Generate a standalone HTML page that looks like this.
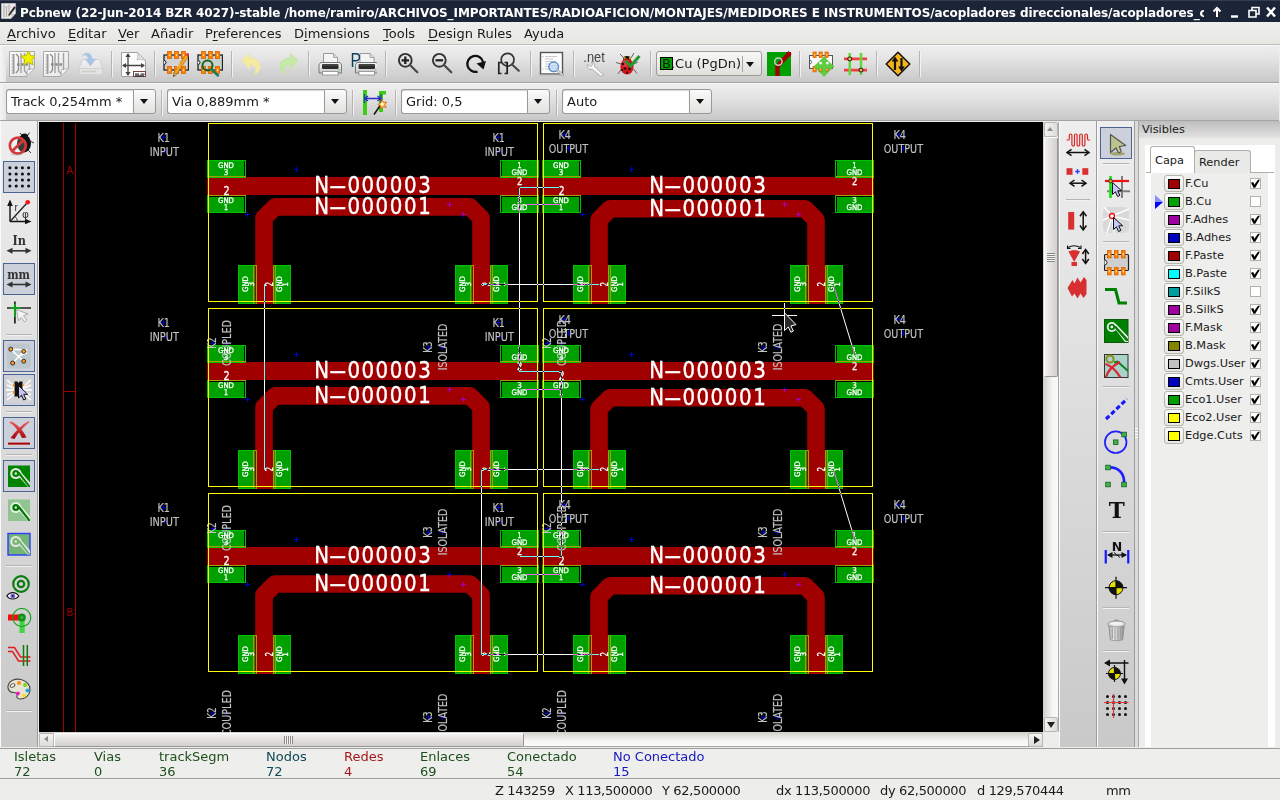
<!DOCTYPE html>
<html lang="es"><head><meta charset="utf-8"><title>Pcbnew</title>
<style>
html,body{margin:0;padding:0}
body{width:1280px;height:800px;overflow:hidden;position:relative;background:#ededeb;font-family:"DejaVu Sans","Liberation Sans",sans-serif;font-size:13px;color:#1a1a1a}
div,span,svg,i{position:absolute;box-sizing:border-box}
i{display:block}
svg text{font-family:"DejaVu Sans","Liberation Sans",sans-serif}
#title{left:0;top:0;width:1280px;height:22px;background:#1b2537;border-top:1px solid #343e52;color:#fff;font-weight:bold;font-size:12px;line-height:25px;white-space:nowrap;overflow:hidden}
#menu{left:0;top:22px;width:1280px;height:23px;background:linear-gradient(#efefed,#e6e6e3);border-bottom:1px solid #bdbdb9}
#menu span{top:1px;line-height:22px;font-size:13px;white-space:nowrap}
#menu u{text-decoration:underline;text-underline-offset:2px}
.tb{left:0;width:1279px;background:linear-gradient(#eeeeee,#e4e4e4 35%,#c8c8c8);border-top:1px solid #f8f8f8;border-bottom:1px solid #a4a4a4}
.tb .grip{left:0;top:0;width:6px;height:100%;background:linear-gradient(90deg,#f4f4f4,#e6e6e6)}
.sep{width:2px;border-left:1px solid #b4b4b4;border-right:1px solid #f2f2f2}
.hsep{height:2px;border-top:1px solid #b4b4b4;border-bottom:1px solid #f2f2f2}
.ic{width:26px;height:26px}
.ic svg{left:0;top:0}
.combo{height:25px;top:5px;font-size:13px}
.combo .f{left:0;top:0;height:25px;background:#fff;border:1px solid #9a9a94;border-right:none;border-radius:3px 0 0 3px;box-shadow:inset 0 1px 1px #d8d8d8;line-height:24px;padding-left:4px;white-space:nowrap;overflow:hidden}
.combo .b{top:0;width:23px;height:25px;background:linear-gradient(#fafafa,#e2e2e0);border:1px solid #9a9a94;border-radius:0 3px 3px 0}
.combo .b:after{content:"";position:absolute;left:6px;top:9px;border:4.500px solid transparent;border-top:5px solid #111;border-bottom:none}
.vtb{background:linear-gradient(#eeeeee,#c9c9c9);border-left:1px solid #fafafa;border-right:1px solid #9c9c9c}
.sel{background:#cbd0db;border:1px solid #4b6592}
#canvas{left:39px;top:122px;width:1004px;height:610px;background:#000}
.msg{font-size:13px;line-height:15px;white-space:nowrap}
.lay{left:1151px;width:116px;height:18px;font-size:11.33px}
.lay .sw{left:13px;top:1px;width:20px;height:17px;background:linear-gradient(#fbfbfa,#e6e6e3);border:1px solid #b5b5ae;border-radius:3px}
.lay .sw i{left:3px;top:3px;width:12px;height:10px;border:1px solid #000}
.lay .nm{left:34px;top:0;line-height:18px;white-space:nowrap}
.lay .cb{left:99px;top:4px;width:11px;height:11px;background:#fff;border:1px solid #b2b2aa}
.lay .cb svg{left:-1.500px;top:-1px}
</style></head>
<body>
<div id="title"><svg style="left:1px;top:2px" width="16" height="16" viewBox="0 0 16 16"><path d="M0.500 0.500H14.500V10.500L10 15.500H0.500z" fill="#ececec" stroke="#d8d8d8" stroke-width=".6"/><path d="M10 15.500l.6-4.400 3.900-.6z" fill="#c8c8c8"/><path d="M3 1.500v13M5.500 3v11M8 1.500v8" stroke="#b4b4b4" stroke-width="1.300" fill="none"/><path d="M2 4h9" stroke="#c8c8c8" stroke-width=".8"/><path d="M13.200 3.600l1.500 1L8.600 12.600l-1.300.4.200-1.400z" fill="#1c1c1c" stroke="#555" stroke-width=".5"/><path d="M7.300 13l.3-1.600 1.200.9z" fill="#e8d838"/><path d="M13.300 3.500l.9-1 1.400 1-.8 1.100z" fill="#e878c8"/></svg><span style="left:20px;top:0;width:1184px;overflow:hidden;letter-spacing:-0.12px">Pcbnew (22-Jun-2014 BZR 4027)-stable <b style="letter-spacing:-0.092px">/home/ramiro/ARCHIVOS_IMPORTANTES/RADIOAFICION/MONTAJES/MEDIDORES E INSTRUMENTOS/acopladores direccionales/acopladores_c</b></span><svg style="left:1208px;top:0" width="72" height="22" viewBox="0 0 72 22" fill="none" stroke="#fff" stroke-width="2"><path d="M9 16V7M5.5 10.5L9 7l3.5 3.500"/><path d="M23 15.500h7" stroke-width="2.400"/><path d="M41 9.500h7v6.500h-7zM44 9V6.500h7V13h-2.500" stroke-width="1.600"/><path d="M59 6.500l8 9M67 6.500l-8 9" stroke-width="2.400"/></svg></div>
<div id="menu">
<span style="left:7px"><u>A</u>rchivo</span>
<span style="left:68px"><u>E</u>ditar</span>
<span style="left:118px"><u>V</u>er</span>
<span style="left:151px">Añadir</span>
<span style="left:205px">P<u>r</u>eferences</span>
<span style="left:294px">D<u>i</u>mensions</span>
<span style="left:383px"><u>T</u>ools</span>
<span style="left:428px"><u>D</u>esign Rules</span>
<span style="left:524px">Ayuda</span>
</div>
<div class="tb" id="tb1" style="top:45px;height:38px"><i class="grip"></i>
<div class="ic" style="left:9px;top:5px"><svg width="26" height="26" viewBox="0 0 26 26"><defs><linearGradient id="pg" x1="0" y1="0" x2="1" y2="1"><stop offset="0" stop-color="#fff"/><stop offset="1" stop-color="#e2e2e2"/></linearGradient></defs><path d="M0.500 0.500H25.500V17.500L17.500 25.500H0.500z" fill="url(#pg)" stroke="#a8a8a8"/><path d="M17.500 25.500L18.500 18.500L25.500 17.500z" fill="#f4f4f4" stroke="#b0b0b0" stroke-width=".8"/><path d="M4.500 3v20" stroke="#9a9a9a" stroke-width="2"/><path d="M7 3l2.500 2.500V19l-2.500 3" stroke="#8a8a8a" fill="none" stroke-width="1.200"/><path d="M12 2v20M15.500 2v18l3 3M20.500 2v17" stroke="#a2a2a2" fill="none" stroke-width="1.400"/><path d="M8 13.500h11" stroke="#8c8c8c" stroke-width="2.400" stroke-dasharray="2.600 1.600"/><path d="M2.500 3v20" stroke="#c4c4c4" stroke-dasharray="1 2.200"/><path d="M19.400 -0.400l2.200 5 5.400.5-4.100 3.600 1.200 5.300-4.700-2.800-4.700 2.800 1.200-5.300-4.100-3.600 5.400-.5z" fill="#f2f200" stroke="#b4b400" stroke-width=".9" stroke-linejoin="round"/></svg></div>
<div class="ic" style="left:43px;top:5px"><svg width="26" height="26" viewBox="0 0 26 26"><defs><linearGradient id="pg" x1="0" y1="0" x2="1" y2="1"><stop offset="0" stop-color="#fff"/><stop offset="1" stop-color="#e2e2e2"/></linearGradient></defs><path d="M0.500 0.500H25.500V17.500L17.500 25.500H0.500z" fill="url(#pg)" stroke="#a8a8a8"/><path d="M17.500 25.500L18.500 18.500L25.500 17.500z" fill="#f4f4f4" stroke="#b0b0b0" stroke-width=".8"/><path d="M4.500 3v20" stroke="#9a9a9a" stroke-width="2"/><path d="M7 3l2.500 2.500V19l-2.500 3" stroke="#8a8a8a" fill="none" stroke-width="1.200"/><path d="M12 2v20M15.500 2v18l3 3M20.500 2v17" stroke="#a2a2a2" fill="none" stroke-width="1.400"/><path d="M8 13.500h11" stroke="#8c8c8c" stroke-width="2.400" stroke-dasharray="2.600 1.600"/><path d="M2.500 3v20" stroke="#c4c4c4" stroke-dasharray="1 2.200"/></svg></div>
<div class="ic" style="left:78px;top:5px"><svg width="26" height="26" viewBox="0 0 26 26"><defs><linearGradient id="sv" x1="0" y1="0" x2="0" y2="1"><stop offset="0" stop-color="#f2f2f2"/><stop offset="1" stop-color="#dcdcdc"/></linearGradient></defs><path d="M4.500 8.500h17l3.500 9v6.500h-24v-6.500z" fill="url(#sv)" stroke="#d0d0d0"/><rect x="1.500" y="17.500" width="23" height="6" fill="#e4e4e4" stroke="#d2d2d2"/><path d="M4 20.500h14" stroke="#cdcdcd" stroke-width="1.600"/><path d="M4 5.500c2-5 9-5 10.500 2.500h3.500l-5.500 7-5.500-7h3.200c-.7-4.500-4-4.800-6.200-2.500z" fill="#a9c3e2" stroke="#b9cde6" stroke-width=".6"/></svg></div>
<div class="ic" style="left:121px;top:5px"><svg width="26" height="26" viewBox="0 0 26 26"><path d="M0.500 1.500H16.500L24.500 9.500V25.500H0.500z" fill="#fdfdfd" stroke="#a0a0a0"/><path d="M16.500 1.500c1 3 0 6-.5 7.500 2-.8 5-.8 8.500.5z" fill="#e0e0e0" stroke="#b0b0b0" stroke-width=".7"/><path d="M7 3v21M2 14.500h21" stroke="#444" stroke-width="1.300"/><path d="M7 2l-2.600 4h5.200zM7 25l-2.600-4h5.200zM1 14.500l4-2.600v5.200zM24 14.500l-4-2.600v5.200z" fill="#444"/><rect x="12.500" y="20.500" width="12" height="5" fill="#fff" stroke="#6a3030" stroke-width=".9"/><path d="M14 23.200h4M19.500 23.200h4M14 25h9" stroke="#333" stroke-width="1.300"/></svg></div>
<div class="ic" style="left:163px;top:5px"><svg width="26" height="26" viewBox="0 0 26 26"><rect x="1" y="4" width="24.500" height="15" fill="#d2d2d2" stroke="#222" stroke-width="1.300"/><path d="M1 9.500a2 2 0 0 1 0 4" fill="#eee" stroke="#222" stroke-width="1"/><rect x="4.5" y="0.5" width="4" height="7" fill="#ff8200" stroke="#d86400" stroke-width=".8"/><rect x="5.9" y="3.3" width="1.300" height="1.600" fill="#ffe8c8"/><rect x="4.5" y="15.5" width="4" height="7" fill="#ff8200" stroke="#d86400" stroke-width=".8"/><rect x="5.9" y="18.3" width="1.300" height="1.600" fill="#ffe8c8"/><rect x="11.5" y="0.5" width="4" height="7" fill="#ff8200" stroke="#d86400" stroke-width=".8"/><rect x="12.9" y="3.3" width="1.300" height="1.600" fill="#ffe8c8"/><rect x="11.5" y="15.5" width="4" height="7" fill="#ff8200" stroke="#d86400" stroke-width=".8"/><rect x="12.9" y="18.3" width="1.300" height="1.600" fill="#ffe8c8"/><rect x="18.5" y="0.5" width="4" height="7" fill="#ff8200" stroke="#d86400" stroke-width=".8"/><rect x="19.9" y="3.3" width="1.300" height="1.600" fill="#ffe8c8"/><rect x="18.5" y="15.5" width="4" height="7" fill="#ff8200" stroke="#d86400" stroke-width=".8"/><rect x="19.9" y="18.3" width="1.300" height="1.600" fill="#ffe8c8"/><path d="M22.600 3.800l2.600 1.700L13.500 23.300l-3 2.300.4-4z" fill="#f5a623" stroke="#b26a00" stroke-width=".7"/><path d="M16.500 12.500L14 16.500" stroke="#ffd98a" stroke-width="1"/><path d="M22.600 3.800l1-1.300a1.600 1.600 0 0 1 2.600 1.700l-1 1.300z" fill="#e8384f"/><path d="M10.500 25.600l.4-4 2.600 1.700z" fill="#e8c9a0" stroke="#6a4a20" stroke-width=".5"/><path d="M10.500 25.600l.2-1.600 1.100.7z" fill="#222"/></svg></div>
<div class="ic" style="left:197px;top:5px"><svg width="26" height="26" viewBox="0 0 26 26"><rect x="1" y="4" width="24.500" height="15" fill="#c8d2cc" stroke="#222" stroke-width="1.300"/><path d="M1 9.500a2 2 0 0 1 0 4" fill="#eee" stroke="#222" stroke-width="1"/><rect x="4.5" y="0.5" width="4" height="7" fill="#ff8200" stroke="#d86400" stroke-width=".8"/><rect x="5.9" y="3.3" width="1.300" height="1.600" fill="#ffe8c8"/><rect x="4.5" y="15.5" width="4" height="7" fill="#ff8200" stroke="#d86400" stroke-width=".8"/><rect x="5.9" y="18.3" width="1.300" height="1.600" fill="#ffe8c8"/><rect x="11.5" y="0.5" width="4" height="7" fill="#ff8200" stroke="#d86400" stroke-width=".8"/><rect x="12.9" y="3.3" width="1.300" height="1.600" fill="#ffe8c8"/><rect x="11.5" y="15.5" width="4" height="7" fill="#ff8200" stroke="#d86400" stroke-width=".8"/><rect x="12.9" y="18.3" width="1.300" height="1.600" fill="#ffe8c8"/><rect x="18.5" y="0.5" width="4" height="7" fill="#ff8200" stroke="#d86400" stroke-width=".8"/><rect x="19.9" y="3.3" width="1.300" height="1.600" fill="#ffe8c8"/><rect x="18.5" y="15.5" width="4" height="7" fill="#ff8200" stroke="#d86400" stroke-width=".8"/><rect x="19.9" y="18.3" width="1.300" height="1.600" fill="#ffe8c8"/><circle cx="10.500" cy="14.500" r="5" fill="none" stroke="#20601f" stroke-width="2"/><path d="M14.500 18.500l6.500 6" stroke="#148060" stroke-width="2.400" stroke-linecap="round"/></svg></div>
<div class="ic" style="left:239px;top:5px"><svg width="26" height="26" viewBox="0 0 26 26"><path d="M3 9.500L10.500 3v4c7 0 10 4 10.500 8 .3 3-1.500 6-4 7.500-.8.400-1.500-.2-1-1 1.500-2.500 1.800-8-5.500-8v4.500z" fill="#f7eba0" stroke="#f1e69c" stroke-width="1"/></svg></div>
<div class="ic" style="left:275px;top:5px"><svg width="26" height="26" viewBox="0 0 26 26"><path d="M23 9.500L15.500 3v4c-7 0-10 4-10.500 8-.3 3 1.500 6 4 7.500.8.400 1.500-.2 1-1-1.500-2.500-1.800-8 5.500-8v4.500z" fill="#c4eaa6" stroke="#c0e6a4" stroke-width="1"/></svg></div>
<div class="ic" style="left:317px;top:5px"><svg width="26" height="26" viewBox="0 0 26 26"><defs><linearGradient id="pr" x1="0" y1="0" x2="0" y2="1"><stop offset="0" stop-color="#fafafa"/><stop offset="1" stop-color="#c6c6c6"/></linearGradient></defs><path d="M6.500 12V2.500h10l4 4V12z" fill="#f4f4f4" stroke="#9a9a9a"/><path d="M16.500 2.500v4h4" fill="#ddd" stroke="#9a9a9a" stroke-width=".8"/><path d="M3.500 11.500h19.500l1.500 2.500v8h-22.500v-8z" fill="url(#pr)" stroke="#7a7a7a"/><rect x="5" y="13" width="16.500" height="5" rx="1" fill="#2c2c2c"/><path d="M5.500 14h15.500" stroke="#666" stroke-width=".8"/><rect x="5.500" y="20.500" width="15.500" height="3.500" fill="#fff" stroke="#8a8a8a" stroke-width=".8"/><circle cx="22.300" cy="18.800" r=".8" fill="#5fd24a"/></svg></div>
<div class="ic" style="left:351px;top:5px"><svg width="26" height="26" viewBox="0 0 26 26"><g transform="translate(2.500 0)"><defs><linearGradient id="pr" x1="0" y1="0" x2="0" y2="1"><stop offset="0" stop-color="#fafafa"/><stop offset="1" stop-color="#c6c6c6"/></linearGradient></defs><path d="M6.500 12V2.500h10l4 4V12z" fill="#f4f4f4" stroke="#9a9a9a"/><path d="M16.500 2.500v4h4" fill="#ddd" stroke="#9a9a9a" stroke-width=".8"/><path d="M3.500 11.500h19.500l1.500 2.500v8h-22.500v-8z" fill="url(#pr)" stroke="#7a7a7a"/><rect x="5" y="13" width="16.500" height="5" rx="1" fill="#2c2c2c"/><path d="M5.500 14h15.500" stroke="#666" stroke-width=".8"/><rect x="5.500" y="20.500" width="15.500" height="3.500" fill="#fff" stroke="#8a8a8a" stroke-width=".8"/><circle cx="22.300" cy="18.800" r=".8" fill="#5fd24a"/></g><text x="-0.500" y="15.500" font-size="20" fill="#0b3f5c" style="font-family:Liberation Sans,sans-serif" textLength="10.500" lengthAdjust="spacingAndGlyphs">P</text></svg></div>
<div class="ic" style="left:395px;top:5px"><svg width="26" height="26" viewBox="0 0 26 26"><circle cx="10.300" cy="9.300" r="6.400" fill="none" stroke="#333" stroke-width="1.900"/><path d="M15 14l7.300 7.300" stroke="#4a4a4a" stroke-width="2.300" stroke-linecap="round"/><path d="M6.500 9.300h7.600M10.300 5.500v7.600" stroke="#222" stroke-width="2.300"/></svg></div>
<div class="ic" style="left:429px;top:5px"><svg width="26" height="26" viewBox="0 0 26 26"><circle cx="10.300" cy="9.300" r="6.400" fill="none" stroke="#333" stroke-width="1.900"/><path d="M15 14l7.300 7.300" stroke="#4a4a4a" stroke-width="2.300" stroke-linecap="round"/><path d="M6.500 9.300h7.600" stroke="#222" stroke-width="2.300"/></svg></div>
<div class="ic" style="left:463px;top:5px"><svg width="26" height="26" viewBox="0 0 26 26"><path d="M14.500 20.600a8 8 0 1 1 5.600-9.600" fill="none" stroke="#111" stroke-width="2.300"/><path d="M13.500 12.500l9.500-2.500-2.500 8.500z" fill="#111"/></svg></div>
<div class="ic" style="left:497px;top:5px"><svg width="26" height="26" viewBox="0 0 26 26"><circle cx="10.600" cy="8.700" r="6.400" fill="none" stroke="#333" stroke-width="1.700"/><path d="M15 13.500l6.800 6.300" stroke="#4a4a4a" stroke-width="2.200" stroke-linecap="round"/><path d="M4.500 11.500H1.800v11h2.700M7.500 11.500h2.700v11H7.500" fill="none" stroke="#222" stroke-width="1.700"/><path d="M10.300 12v10" stroke="#222" stroke-width="1"/></svg></div>
<div class="ic" style="left:539px;top:5px"><svg width="26" height="26" viewBox="0 0 26 26"><rect x="1.500" y="1.500" width="22" height="21.500" fill="#fcfcfc" stroke="#555" stroke-width="1.400"/><path d="M0 24h24" stroke="#bbb" stroke-width="1"/><path d="M6 5.500h12M6 8h8M6 10.500h11M6 13h5M6 15.500h4M6 18h4" stroke="#c4c4c4" stroke-width=".9"/><path d="M3.500 5.500h1M3.500 18h1" stroke="#aaa"/><circle cx="14.700" cy="15.800" r="4.800" fill="#d7e6f7" stroke="#5b8fd0" stroke-width="1.500"/><path d="M11.500 14.500h6.500M11.500 17h6.500" stroke="#a9c6ea" stroke-width=".9"/><path d="M18.500 19.500l5 4.500" stroke="#9a9a9a" stroke-width="2.600" stroke-linecap="round"/><path d="M18.500 19.500l5 4.500" stroke="#dcdcdc" stroke-width="1.200" stroke-linecap="round"/></svg></div>
<div class="ic" style="left:581px;top:5px"><svg width="26" height="26" viewBox="0 0 26 26"><text x="2.300" y="11.200" font-size="14" fill="#444" style="font-family:Liberation Sans,sans-serif" textLength="21.500" lengthAdjust="spacingAndGlyphs">.net</text><path d="M6.500 13.500a3.600 3.600 0 0 0 4.600 4.800L20 25.500l2.600-1.600-9-8.300a3.600 3.600 0 0 0-3.400-4.700l1.700 2.600-2.200 2.200z" fill="#f6f6f6" stroke="#a8a8a8" stroke-width=".9"/></svg></div>
<div class="ic" style="left:615px;top:5px"><svg width="26" height="26" viewBox="0 0 26 26"><path d="M5 3l4 4M19 2l-3 5M1 11.500l5 1.500M3 23l3.500-5M23 11l-4 2M22 22.500l-3.500-4.500" stroke="#555" stroke-width=".9" fill="none"/><ellipse cx="12" cy="7.500" rx="4" ry="2.600" fill="#111"/><path d="M8.500 7h2M14 7h2" stroke="#f2d000" stroke-width="1.600"/><ellipse cx="12" cy="15.500" rx="6.600" ry="8" fill="#d81418"/><ellipse cx="10" cy="12.500" rx="3" ry="3.500" fill="#f0505a" opacity=".6"/><circle cx="8" cy="13" r="1.200" fill="#111"/><circle cx="10" cy="17.500" r="1.300" fill="#111"/><circle cx="14.500" cy="18" r="1.300" fill="#111"/><circle cx="12" cy="21.500" r="1.100" fill="#111"/><circle cx="16" cy="13.500" r="1.100" fill="#111"/><circle cx="7" cy="19" r="1" fill="#111"/><path d="M10.500 9.500l5 5.500 9-10" fill="none" stroke="#1f9a2c" stroke-width="3"/></svg></div>
<div class="ic" style="left:766px;top:5px"><svg width="26" height="26" viewBox="0 0 26 26"><rect x="1" y="1" width="24" height="24" fill="#00a000"/><path d="M11.500 25V15.500L24 1.500" fill="none" stroke="#a00000" stroke-width="4.400"/><path d="M20 1h5v5z" fill="#a00000"/><circle cx="12.400" cy="10.600" r="3.700" fill="none" stroke="#c8c8c8" stroke-width="1.500"/></svg></div>
<div class="ic" style="left:808px;top:5px"><svg width="26" height="26" viewBox="0 0 26 26"><rect x="1.500" y="4.500" width="23" height="13" fill="#fafafa" stroke="#555" stroke-width="1"/><path d="M1.500 9a2 2 0 0 1 0 4" fill="none" stroke="#555" stroke-width=".8"/><rect x="5.0" y="1.0" width="3.200" height="5.400" fill="#ff8200" stroke="#d86400" stroke-width=".7"/><rect x="6.1" y="3.0" width="1" height="1.400" fill="#ffe8c8"/><rect x="5.0" y="15.5" width="3.200" height="5.400" fill="#ff8200" stroke="#d86400" stroke-width=".7"/><rect x="6.1" y="17.5" width="1" height="1.400" fill="#ffe8c8"/><rect x="11.0" y="1.0" width="3.200" height="5.400" fill="#ff8200" stroke="#d86400" stroke-width=".7"/><rect x="12.1" y="3.0" width="1" height="1.400" fill="#ffe8c8"/><rect x="11.0" y="15.5" width="3.200" height="5.400" fill="#ff8200" stroke="#d86400" stroke-width=".7"/><rect x="12.1" y="17.5" width="1" height="1.400" fill="#ffe8c8"/><rect x="17.0" y="1.0" width="3.200" height="5.400" fill="#ff8200" stroke="#d86400" stroke-width=".7"/><rect x="18.1" y="3.0" width="1" height="1.400" fill="#ffe8c8"/><rect x="17.0" y="15.5" width="3.200" height="5.400" fill="#ff8200" stroke="#d86400" stroke-width=".7"/><rect x="18.1" y="17.5" width="1" height="1.400" fill="#ffe8c8"/><path d="M16 7l4.500 5h-2.700v3.200h3.200v-2.700l5 4.500-5 4.500v-2.700h-3.200v3.200h2.700l-4.500 5-4.500-5h2.700v-3.200h-3.200v2.700l-5-4.500 5-4.500v2.700h3.200v-3.200h-2.700z" fill="#5fce3e" stroke="#4cb830" stroke-width=".6" transform="translate(0 -1.500)"/></svg></div>
<div class="ic" style="left:842px;top:5px"><svg width="26" height="26" viewBox="0 0 26 26"><path d="M2 7.900h23M2 19.100h23" stroke="#f04040" stroke-width="2.600"/><path d="M7.750 2v22M19 2v22" stroke="#60d840" stroke-width="2.600"/><circle cx="7.750" cy="7.900" r="2" fill="#f7b267" stroke="#111" stroke-width="1"/><circle cx="19" cy="19.100" r="2" fill="#f7b267" stroke="#111" stroke-width="1"/></svg></div>
<div class="ic" style="left:885px;top:5px"><svg width="26" height="26" viewBox="0 0 26 26"><path d="M13 1.200L24.800 13 13 24.800 1.200 13z" fill="#f5b41c" stroke="#111" stroke-width="1.500" stroke-linejoin="round"/><path d="M10 19V9M16.500 7v10" stroke="#111" stroke-width="2.200"/><path d="M10 5.500l-3.400 5h6.800zM16.500 20.500l-3.400-5h6.800z" fill="#111"/></svg></div>
<i class="sep" style="left:111px;top:5px;height:26px"></i>
<i class="sep" style="left:154px;top:5px;height:26px"></i>
<i class="sep" style="left:231px;top:5px;height:26px"></i>
<i class="sep" style="left:308px;top:5px;height:26px"></i>
<i class="sep" style="left:385px;top:5px;height:26px"></i>
<i class="sep" style="left:530px;top:5px;height:26px"></i>
<i class="sep" style="left:573px;top:5px;height:26px"></i>
<i class="sep" style="left:650px;top:5px;height:26px"></i>
<i class="sep" style="left:799px;top:5px;height:26px"></i>
<i class="sep" style="left:876px;top:5px;height:26px"></i>
<i class="sep" style="left:919px;top:5px;height:26px"></i>
<div style="left:656px;top:5px;width:106px;height:25px;border:1px solid #9c9c96;border-radius:3px;background:linear-gradient(#f8f8f7,#dfdfdc);font-size:13px;line-height:23px"><i style="left:3px;top:5px;width:13px;height:13px;background:#00a000;border:1px solid #000"></i><span style="left:5px;top:0">B.Cu (PgDn)</span><i style="left:85px;top:4px;width:1px;height:16px;background:#a8a8a2"></i><i style="left:89px;top:10px;border:4.500px solid transparent;border-top:5px solid #111;border-bottom:none"></i></div>
</div>
<div class="tb" id="tb2" style="top:83px;height:38px"><i class="grip"></i>
<div class="combo" style="left:6px;width:150px"><span class="f" style="width:127px">Track 0,254mm *</span><span class="b" style="left:127px"></span></div>
<i class="sep" style="left:161px;top:6px;height:26px"></i>
<div class="combo" style="left:167px;width:180px"><span class="f" style="width:157px">Via 0,889mm *</span><span class="b" style="left:157px"></span></div>
<i class="sep" style="left:352px;top:6px;height:26px"></i>
<div class="ic" style="left:361px;top:6px"><svg width="26" height="26" viewBox="0 0 26 26"><rect x="2" y="0" width="4" height="25" fill="#3ccc14"/><path d="M18 1h7v3.500h-3V22h-4z" fill="#3ccc14"/><path d="M3.500 4v9M20 4v9" stroke="#1a4a9a" stroke-width="1.400"/><path d="M4 8.500h15.500" stroke="#2828c8" stroke-width="1.500"/><path d="M7 6L4 8.500 7 11M16.500 6l3 2.500-3 2.500" fill="none" stroke="#2828c8" stroke-width="1.300"/><path d="M13 24.500l6.500-9.500" stroke="#111" stroke-width="1.500"/><path d="M21 9.500l1.400 2.900 3.200-.3-2 2.500 1.600 2.800-3.100-.8-2.200 2.400-.2-3.200-2.900-1.300 3-1.200z" fill="#ffd83a" stroke="#e85a20" stroke-width=".9"/><circle cx="21" cy="14" r="1.600" fill="#fffbe0"/></svg></div>
<i class="sep" style="left:395px;top:6px;height:26px"></i>
<div class="combo" style="left:401px;width:149px"><span class="f" style="width:126px">Grid: 0,5</span><span class="b" style="left:126px"></span></div>
<i class="sep" style="left:556px;top:6px;height:26px"></i>
<div class="combo" style="left:562px;width:150px"><span class="f" style="width:127px">Auto</span><span class="b" style="left:127px"></span></div>
</div>
<div class="vtb" style="left:0;top:121px;width:38px;height:626px">
<div class="ic" style="left:5px;top:9px"><svg width="30" height="26" viewBox="0 0 30 26"><path d="M14 3l3 3.500M23.500 2.500l-2.500 4M24 11l4 2M22 20l3 3" stroke="#222" stroke-width=".9" fill="none"/><ellipse cx="18" cy="13.500" rx="7" ry="9" fill="#111"/><ellipse cx="18.500" cy="6" rx="3.500" ry="2.500" fill="#111"/><circle cx="11.800" cy="15.600" r="8" fill="#fff" fill-opacity=".18" stroke="#d23a3a" stroke-width="2.700"/><path d="M6.300 21l11-10.800" stroke="#d23a3a" stroke-width="2.700"/><path d="M4.500 23.800c4 1.800 9 1.500 12.500-.3" stroke="#999" stroke-width="1" fill="none" opacity=".6"/></svg></div>
<i class="sel" style="left:2px;top:40px;width:32px;height:32px"></i>
<div class="ic" style="left:5px;top:42px"><svg width="26" height="28" viewBox="0 0 26 28"><circle cx="3.9" cy="4.8" r="1.550" fill="#111"/><circle cx="3.9" cy="11.0" r="1.550" fill="#111"/><circle cx="3.9" cy="17.0" r="1.550" fill="#111"/><circle cx="3.9" cy="23.0" r="1.550" fill="#111"/><circle cx="10.2" cy="4.8" r="1.550" fill="#111"/><circle cx="10.2" cy="11.0" r="1.550" fill="#111"/><circle cx="10.2" cy="17.0" r="1.550" fill="#111"/><circle cx="10.2" cy="23.0" r="1.550" fill="#111"/><circle cx="16.4" cy="4.8" r="1.550" fill="#111"/><circle cx="16.4" cy="11.0" r="1.550" fill="#111"/><circle cx="16.4" cy="17.0" r="1.550" fill="#111"/><circle cx="16.4" cy="23.0" r="1.550" fill="#111"/><circle cx="22.6" cy="4.8" r="1.550" fill="#111"/><circle cx="22.6" cy="11.0" r="1.550" fill="#111"/><circle cx="22.6" cy="17.0" r="1.550" fill="#111"/><circle cx="22.6" cy="23.0" r="1.550" fill="#111"/></svg></div>
<div class="ic" style="left:5px;top:76.5px"><svg width="27" height="27" viewBox="0 0 27 27"><path d="M4 23.500V5M4 23.500H22" stroke="#111" stroke-width="1.400"/><path d="M4 1.500l-2.800 6.500h5.600zM25.500 23.500l-6.500-2.800v5.600z" fill="#111"/><path d="M4 23.500L21 5" stroke="#222" stroke-width="1.300"/><circle cx="21.700" cy="4.200" r="2.300" fill="#ff1010"/><path d="M9 18.500a7 7 0 0 1 2.500 5" fill="none" stroke="#333" stroke-width=".9"/><text x="8.500" y="13" font-size="10" fill="#333" style="font-family:Liberation Sans,sans-serif">r</text><text x="16" y="19.500" font-size="10.500" fill="#333" style="font-family:DejaVu Sans,sans-serif">φ</text></svg></div>
<div class="ic" style="left:5px;top:111px"><svg width="26" height="26" viewBox="0 0 26 26"><text x="13.200" y="12.600" font-size="13" font-weight="bold" fill="#333" text-anchor="middle" style="font-family:DejaVu Serif,Liberation Serif,serif" textLength="13.500" lengthAdjust="spacingAndGlyphs">In</text><path d="M3 18.800h20" stroke="#333" stroke-width="1.600"/><path d="M0.500 18.800l6-3v6zM25.500 18.800l-6-3v6z" fill="#333"/></svg></div>
<i class="sel" style="left:2px;top:142px;width:32px;height:32px"></i>
<div class="ic" style="left:5px;top:145px"><svg width="26" height="26" viewBox="0 0 26 26"><text x="12.600" y="12.500" font-size="13.500" font-weight="bold" fill="#333" text-anchor="middle" style="font-family:DejaVu Serif,Liberation Serif,serif" textLength="22.800" lengthAdjust="spacingAndGlyphs">mm</text><path d="M3 18.500h20" stroke="#333" stroke-width="1.600"/><path d="M0.500 18.500l6-3v6zM25.500 18.500l-6-3v6z" fill="#333"/></svg></div>
<div class="ic" style="left:5px;top:179px"><svg width="26" height="26" viewBox="0 0 26 26"><path d="M1 8h24M8.900 1.500v22" stroke="#222" stroke-width="1.700"/><path d="M4.500 8H15M8.900 4v13" stroke="#10a020" stroke-width="1.900"/><path d="M10.500 9.500l11.500 4.500-4.500 1.700 3.300 4.300-2.300 1.800-3.300-4.400-2.700 3.600z" fill="#f4f4f4" stroke="#a8a8a8" stroke-width="1"/></svg></div>
<i class="sel" style="left:2px;top:219px;width:32px;height:32px"></i>
<div class="ic" style="left:5px;top:222px"><svg width="26" height="26" viewBox="0 0 26 26"><rect x="1" y="0.500" width="24" height="25" rx="4" fill="#bcc8ce"/><path d="M4.800 6.200L17.700 18.200M17.700 8.400L6.700 20M4.800 6.200l16 0.800M12 13l8.500-3" stroke="#fff" stroke-width="1.500" stroke-linecap="round"/><g fill="#ff9a1e" stroke="#222" stroke-width=".9"><circle cx="4.800" cy="6.200" r="2"/><circle cx="17.700" cy="8.400" r="2"/><circle cx="6.700" cy="20" r="2"/><circle cx="17.700" cy="18.200" r="2"/></g></svg></div>
<i class="sel" style="left:2px;top:253px;width:32px;height:32px"></i>
<div class="ic" style="left:5px;top:256px"><svg width="26" height="26" viewBox="0 0 26 26"><rect x="1" y="0.500" width="24" height="25" rx="4" fill="#d4d4d4"/><path d="M1 3l24 20M25 3L1 23M0 13h26M1 8l24 10M25 8L1 18" stroke="#fff" stroke-width="1.400"/><path d="M8.500 4.500h3l1 1.500 1-1.500h3v15h-8z" fill="#111"/><path d="M7.500 7v3M7.500 14v3M17.500 7v2" stroke="#ff9a1e" stroke-width="1.600"/><path d="M12.500 8.500v12.500l3-2.800 2.200 4.800 2.200-1-2.200-4.700h4z" fill="#c4c4f4" stroke="#111" stroke-width="1"/></svg></div>
<i class="sel" style="left:2px;top:296px;width:32px;height:32px"></i>
<div class="ic" style="left:5px;top:299px"><svg width="26" height="26" viewBox="0 0 26 26"><defs><linearGradient id="rx" x1="0" y1="0" x2="0" y2="1"><stop offset="0" stop-color="#f06060"/><stop offset="1" stop-color="#a00808"/></linearGradient></defs><path d="M3 2.500c5 2 10 9 13 15.500l4.500-.5c-3-7-9-13-15-16zM22.500 1c-7 4-13 10-18 17l4 1c4-7 9-12 15-17z" fill="url(#rx)"/><path d="M2 23.600h22" stroke="#b00000" stroke-width="2"/></svg></div>
<i class="sel" style="left:2px;top:339px;width:32px;height:32px"></i>
<div class="ic" style="left:5px;top:342px"><svg width="26" height="26" viewBox="0 0 26 26"><rect x="2" y="2.500" width="22" height="21.500" fill="#008400"/><path d="M10 10.500l4-2.500 10 11.500v4.500h-2z" fill="#e8e8e8"/><circle cx="9.800" cy="10.500" r="5.600" fill="#e8e8e8"/><path d="M11 9.500l2.500-.5 10.500 13.500v1.500h-1.500z" fill="#008400"/><circle cx="9.800" cy="10.500" r="3.500" fill="#008400"/><circle cx="9.800" cy="10.500" r="1.200" fill="#e8e8e8"/></svg></div>
<div class="ic" style="left:5px;top:376px"><svg width="26" height="26" viewBox="0 0 26 26"><rect x="2" y="2.500" width="22" height="21.500" fill="#90c490"/><path d="M10 10.500l4-2.500 10 11.500v4.500h-2z" fill="#e4efe4"/><circle cx="9.800" cy="10.500" r="5.600" fill="#e4efe4"/><path d="M11 9.500l2.500-.5 10.500 13.500v1.500h-1.500z" fill="#007800"/><circle cx="9.800" cy="10.500" r="3.500" fill="#007800"/><circle cx="9.800" cy="10.500" r="1.200" fill="#e4efe4"/></svg></div>
<div class="ic" style="left:5px;top:410px"><svg width="26" height="26" viewBox="0 0 26 26"><rect x="2" y="2.500" width="22" height="21.500" fill="#74b474" stroke="#2a3cff" stroke-width="1.400"/><path d="M10 10.500l4-2.500 10 11.500v4.500h-2z" fill="#e8e8e8"/><circle cx="9.800" cy="10.500" r="5.600" fill="#e8e8e8"/><path d="M11 9.500l2.500-.5 10.500 13.500v1.500h-1.500z" fill="#74b474"/><circle cx="9.800" cy="10.500" r="3.500" fill="#74b474"/><circle cx="9.800" cy="10.500" r="1.200" fill="#e8e8e8"/></svg></div>
<div class="ic" style="left:5px;top:453px"><svg width="26" height="28" viewBox="0 0 26 28"><circle cx="15" cy="10" r="7.800" fill="none" stroke="#0c7c10" stroke-width="2.200"/><circle cx="15" cy="10" r="3.200" fill="none" stroke="#0c7c10" stroke-width="2.200"/><path d="M0.800 22c3-4.500 9-4.500 12 0-3 4-9 4-12 0z" fill="#fff" stroke="#111" stroke-width="1.100"/><circle cx="6.800" cy="22" r="2.500" fill="#7a6ad8"/><circle cx="6.800" cy="22" r="1" fill="#223"/></svg></div>
<div class="ic" style="left:5px;top:487px"><svg width="26" height="27" viewBox="0 0 26 27"><rect x="2" y="6.500" width="12" height="6" fill="#f01010"/><rect x="13.500" y="12" width="5.200" height="13" fill="#44d444"/><circle cx="15.800" cy="9.500" r="9" fill="none" stroke="#10a018" stroke-width="1.100"/><circle cx="15.800" cy="9.500" r="4" fill="#14901c"/><circle cx="15.800" cy="9.500" r="1.300" fill="#44c444"/></svg></div>
<div class="ic" style="left:5px;top:522px"><svg width="26" height="26" viewBox="0 0 26 26"><path d="M2 4.500h6.500l6 9.500h10M2 8.500h4.500l6 9.500h12" fill="none" stroke="#e02020" stroke-width="1.500"/><path d="M17.500 2v21M21.300 2v21" stroke="#0c7c10" stroke-width="1.500"/></svg></div>
<div class="ic" style="left:5px;top:556px"><svg width="26" height="26" viewBox="0 0 26 26"><path d="M2 9c1-5 7-8 13-6.500 6 1.500 9.500 6 9 11-.5 5-5 8.500-10 8.500-3 0-3.500-2-3-3.500.5-2-1-3-3-3C4 15.500 1.500 13 2 9z" fill="#e8e4d2" stroke="#444" stroke-width="1.100"/><ellipse cx="6.500" cy="8.500" rx="2.500" ry="1.600" fill="#fff" stroke="#444" stroke-width=".9" transform="rotate(-25 6.500 8.500)"/><circle cx="13" cy="6" r="2" fill="#ff8a1a"/><circle cx="19" cy="8" r="2" fill="#7ad420"/><circle cx="21.500" cy="13.500" r="2" fill="#20a0f0"/><circle cx="18" cy="18.500" r="2" fill="#f4e020"/><circle cx="12" cy="16.500" r="2" fill="#f020c0"/></svg></div>
<i class="hsep" style="left:5px;top:213px;width:26px"></i>
<i class="hsep" style="left:5px;top:290px;width:26px"></i>
<i class="hsep" style="left:5px;top:333px;width:26px"></i>
<i class="hsep" style="left:5px;top:444px;width:26px"></i>
<i class="hsep" style="left:5px;top:589px;width:26px"></i>
</div>
<svg id="canvas" viewBox="39 122 1004 610" width="1004" height="610">
<g stroke="#a00000" stroke-width="1" fill="none" shape-rendering="crispEdges">
<path d="M63.5 123V732M75.5 123V732M63.5 391.5H75.5"/>
</g>
<text x="70.0" y="174.0" font-size="11.0" fill="#a00000" text-anchor="middle" textLength="7.0" lengthAdjust="spacingAndGlyphs">A</text>
<text x="70.0" y="616.0" font-size="11.0" fill="#a00000" text-anchor="middle" textLength="7.0" lengthAdjust="spacingAndGlyphs">B</text>
<g transform="translate(0,0)">
<g fill="#a00000" stroke="none" shape-rendering="crispEdges">
<rect x="207" y="177" width="332" height="18"/>
<rect x="254" y="265" width="20" height="39"/>
<rect x="471" y="265" width="20" height="39"/>
</g>
<path d="M264 300V217.9L275.0 206.9H470.0L481 217.9V300" fill="none" stroke="#a00000" stroke-width="17.6" stroke-linejoin="round"/>
<g fill="#00a000" stroke="none" shape-rendering="crispEdges">
<rect x="207" y="161" width="37" height="16"/>
<rect x="207" y="197" width="37" height="16"/>
<rect x="502" y="161" width="36" height="16"/>
<rect x="502" y="197" width="36" height="16"/>
<rect x="238" y="265" width="17" height="38"/>
<rect x="274" y="265" width="17" height="38"/>
<rect x="455" y="265" width="17" height="38"/>
<rect x="491" y="265" width="16" height="38"/>
</g>
<g fill="none" shape-rendering="crispEdges" stroke-width="1">
<g stroke="#00c200">
<rect x="207.5" y="160.5" width="38" height="17"/>
<rect x="207.5" y="195.5" width="38" height="17"/>
<rect x="500.5" y="160.5" width="38" height="17"/>
<rect x="500.5" y="195.5" width="38" height="17"/>
<rect x="238.5" y="265.5" width="18" height="38"/>
<rect x="273.5" y="265.5" width="17" height="38"/>
<rect x="455.5" y="265.5" width="18" height="38"/>
<rect x="490.5" y="265.5" width="17" height="38"/>
</g><g stroke="#a0a000">
<path d="M207.5 176.5H245.5M207.5 195.500H245.500M500.500 176.500H538.500M500.500 195.500H538.500"/>
<path d="M253.500 265.500V303.500M256.500 265.500V303.500M273.500 265.500V303.500M275.500 265.500V303.500M253.500 265.500H256.500M273.500 265.500H275.500"/>
<path d="M470.500 265.500V303.500M473.500 265.500V303.500M490.500 265.500V303.500M492.500 265.500V303.500M470.500 265.500H473.500M490.500 265.500H492.500"/>
</g></g>
</g>
<g transform="translate(335,0)">
<g fill="#a00000" stroke="none" shape-rendering="crispEdges">
<rect x="207" y="177" width="332" height="18"/>
<rect x="254" y="265" width="20" height="39"/>
<rect x="471" y="265" width="20" height="39"/>
</g>
<path d="M264 300V219.7L275.0 208.7H470.0L481 219.7V300" fill="none" stroke="#a00000" stroke-width="17.6" stroke-linejoin="round"/>
<g fill="#00a000" stroke="none" shape-rendering="crispEdges">
<rect x="207" y="161" width="37" height="16"/>
<rect x="207" y="197" width="37" height="16"/>
<rect x="502" y="161" width="36" height="16"/>
<rect x="502" y="197" width="36" height="16"/>
<rect x="238" y="265" width="17" height="38"/>
<rect x="274" y="265" width="17" height="38"/>
<rect x="455" y="265" width="17" height="38"/>
<rect x="491" y="265" width="16" height="38"/>
</g>
<g fill="none" shape-rendering="crispEdges" stroke-width="1">
<g stroke="#00c200">
<rect x="207.5" y="160.5" width="38" height="17"/>
<rect x="207.5" y="195.5" width="38" height="17"/>
<rect x="500.5" y="160.5" width="38" height="17"/>
<rect x="500.5" y="195.5" width="38" height="17"/>
<rect x="238.5" y="265.5" width="18" height="38"/>
<rect x="273.5" y="265.5" width="17" height="38"/>
<rect x="455.5" y="265.5" width="18" height="38"/>
<rect x="490.5" y="265.5" width="17" height="38"/>
</g><g stroke="#a0a000">
<path d="M207.5 176.5H245.5M207.5 195.500H245.500M500.500 176.500H538.500M500.500 195.500H538.500"/>
<path d="M253.500 265.500V303.500M256.500 265.500V303.500M273.500 265.500V303.500M275.500 265.500V303.500M253.500 265.500H256.500M273.500 265.500H275.500"/>
<path d="M470.500 265.500V303.500M473.500 265.500V303.500M490.500 265.500V303.500M492.500 265.500V303.500M470.500 265.500H473.500M490.500 265.500H492.500"/>
</g></g>
</g>
<g transform="translate(0,185)">
<g fill="#a00000" stroke="none" shape-rendering="crispEdges">
<rect x="207" y="177" width="332" height="18"/>
<rect x="254" y="265" width="20" height="39"/>
<rect x="471" y="265" width="20" height="39"/>
</g>
<path d="M264 300V221.9L275.0 210.9H470.0L481 221.9V300" fill="none" stroke="#a00000" stroke-width="17.6" stroke-linejoin="round"/>
<g fill="#00a000" stroke="none" shape-rendering="crispEdges">
<rect x="207" y="161" width="37" height="16"/>
<rect x="207" y="197" width="37" height="16"/>
<rect x="502" y="161" width="36" height="16"/>
<rect x="502" y="197" width="36" height="16"/>
<rect x="238" y="265" width="17" height="38"/>
<rect x="274" y="265" width="17" height="38"/>
<rect x="455" y="265" width="17" height="38"/>
<rect x="491" y="265" width="16" height="38"/>
</g>
<g fill="none" shape-rendering="crispEdges" stroke-width="1">
<g stroke="#00c200">
<rect x="207.5" y="160.5" width="38" height="17"/>
<rect x="207.5" y="195.5" width="38" height="17"/>
<rect x="500.5" y="160.5" width="38" height="17"/>
<rect x="500.5" y="195.5" width="38" height="17"/>
<rect x="238.5" y="265.5" width="18" height="38"/>
<rect x="273.5" y="265.5" width="17" height="38"/>
<rect x="455.5" y="265.5" width="18" height="38"/>
<rect x="490.5" y="265.5" width="17" height="38"/>
</g><g stroke="#a0a000">
<path d="M207.5 176.5H245.5M207.5 195.500H245.500M500.500 176.500H538.500M500.500 195.500H538.500"/>
<path d="M253.500 265.500V303.500M256.500 265.500V303.500M273.500 265.500V303.500M275.500 265.500V303.500M253.500 265.500H256.500M273.500 265.500H275.500"/>
<path d="M470.500 265.500V303.500M473.500 265.500V303.500M490.500 265.500V303.500M492.500 265.500V303.500M470.500 265.500H473.500M490.500 265.500H492.500"/>
</g></g>
</g>
<g transform="translate(335,185)">
<g fill="#a00000" stroke="none" shape-rendering="crispEdges">
<rect x="207" y="177" width="332" height="18"/>
<rect x="254" y="265" width="20" height="39"/>
<rect x="471" y="265" width="20" height="39"/>
</g>
<path d="M264 300V223.7L275.0 212.7H470.0L481 223.7V300" fill="none" stroke="#a00000" stroke-width="17.6" stroke-linejoin="round"/>
<g fill="#00a000" stroke="none" shape-rendering="crispEdges">
<rect x="207" y="161" width="37" height="16"/>
<rect x="207" y="197" width="37" height="16"/>
<rect x="502" y="161" width="36" height="16"/>
<rect x="502" y="197" width="36" height="16"/>
<rect x="238" y="265" width="17" height="38"/>
<rect x="274" y="265" width="17" height="38"/>
<rect x="455" y="265" width="17" height="38"/>
<rect x="491" y="265" width="16" height="38"/>
</g>
<g fill="none" shape-rendering="crispEdges" stroke-width="1">
<g stroke="#00c200">
<rect x="207.5" y="160.5" width="38" height="17"/>
<rect x="207.5" y="195.5" width="38" height="17"/>
<rect x="500.5" y="160.5" width="38" height="17"/>
<rect x="500.5" y="195.5" width="38" height="17"/>
<rect x="238.5" y="265.5" width="18" height="38"/>
<rect x="273.5" y="265.5" width="17" height="38"/>
<rect x="455.5" y="265.5" width="18" height="38"/>
<rect x="490.5" y="265.5" width="17" height="38"/>
</g><g stroke="#a0a000">
<path d="M207.5 176.5H245.5M207.5 195.500H245.500M500.500 176.500H538.500M500.500 195.500H538.500"/>
<path d="M253.500 265.500V303.500M256.500 265.500V303.500M273.500 265.500V303.500M275.500 265.500V303.500M253.500 265.500H256.500M273.500 265.500H275.500"/>
<path d="M470.500 265.500V303.500M473.500 265.500V303.500M490.500 265.500V303.500M492.500 265.500V303.500M470.500 265.500H473.500M490.500 265.500H492.500"/>
</g></g>
</g>
<g transform="translate(0,370)">
<g fill="#a00000" stroke="none" shape-rendering="crispEdges">
<rect x="207" y="177" width="332" height="18"/>
<rect x="254" y="265" width="20" height="39"/>
<rect x="471" y="265" width="20" height="39"/>
</g>
<path d="M264 300V225.0L275.0 214.0H470.0L481 225.0V300" fill="none" stroke="#a00000" stroke-width="17.6" stroke-linejoin="round"/>
<g fill="#00a000" stroke="none" shape-rendering="crispEdges">
<rect x="207" y="161" width="37" height="16"/>
<rect x="207" y="197" width="37" height="16"/>
<rect x="502" y="161" width="36" height="16"/>
<rect x="502" y="197" width="36" height="16"/>
<rect x="238" y="265" width="17" height="38"/>
<rect x="274" y="265" width="17" height="38"/>
<rect x="455" y="265" width="17" height="38"/>
<rect x="491" y="265" width="16" height="38"/>
</g>
<g fill="none" shape-rendering="crispEdges" stroke-width="1">
<g stroke="#00c200">
<rect x="207.5" y="160.5" width="38" height="17"/>
<rect x="207.5" y="195.5" width="38" height="17"/>
<rect x="500.5" y="160.5" width="38" height="17"/>
<rect x="500.5" y="195.5" width="38" height="17"/>
<rect x="238.5" y="265.5" width="18" height="38"/>
<rect x="273.5" y="265.5" width="17" height="38"/>
<rect x="455.5" y="265.5" width="18" height="38"/>
<rect x="490.5" y="265.5" width="17" height="38"/>
</g><g stroke="#a0a000">
<path d="M207.5 176.5H245.5M207.5 195.500H245.500M500.500 176.500H538.500M500.500 195.500H538.500"/>
<path d="M253.500 265.500V303.500M256.500 265.500V303.500M273.500 265.500V303.500M275.500 265.500V303.500M253.500 265.500H256.500M273.500 265.500H275.500"/>
<path d="M470.500 265.500V303.500M473.500 265.500V303.500M490.500 265.500V303.500M492.500 265.500V303.500M470.500 265.500H473.500M490.500 265.500H492.500"/>
</g></g>
</g>
<g transform="translate(335,370)">
<g fill="#a00000" stroke="none" shape-rendering="crispEdges">
<rect x="207" y="177" width="332" height="18"/>
<rect x="254" y="265" width="20" height="39"/>
<rect x="471" y="265" width="20" height="39"/>
</g>
<path d="M264 300V226.8L275.0 215.8H470.0L481 226.8V300" fill="none" stroke="#a00000" stroke-width="17.6" stroke-linejoin="round"/>
<g fill="#00a000" stroke="none" shape-rendering="crispEdges">
<rect x="207" y="161" width="37" height="16"/>
<rect x="207" y="197" width="37" height="16"/>
<rect x="502" y="161" width="36" height="16"/>
<rect x="502" y="197" width="36" height="16"/>
<rect x="238" y="265" width="17" height="38"/>
<rect x="274" y="265" width="17" height="38"/>
<rect x="455" y="265" width="17" height="38"/>
<rect x="491" y="265" width="16" height="38"/>
</g>
<g fill="none" shape-rendering="crispEdges" stroke-width="1">
<g stroke="#00c200">
<rect x="207.5" y="160.5" width="38" height="17"/>
<rect x="207.5" y="195.5" width="38" height="17"/>
<rect x="500.5" y="160.5" width="38" height="17"/>
<rect x="500.5" y="195.5" width="38" height="17"/>
<rect x="238.5" y="265.5" width="18" height="38"/>
<rect x="273.5" y="265.5" width="17" height="38"/>
<rect x="455.5" y="265.5" width="18" height="38"/>
<rect x="490.5" y="265.5" width="17" height="38"/>
</g><g stroke="#a0a000">
<path d="M207.5 176.5H245.5M207.5 195.500H245.500M500.500 176.500H538.500M500.500 195.500H538.500"/>
<path d="M253.500 265.500V303.500M256.500 265.500V303.500M273.500 265.500V303.500M275.500 265.500V303.500M253.500 265.500H256.500M273.500 265.500H275.500"/>
<path d="M470.500 265.500V303.500M473.500 265.500V303.500M490.500 265.500V303.500M492.500 265.500V303.500M470.500 265.500H473.500M490.500 265.500H492.500"/>
</g></g>
</g>
<g transform="translate(0,0)">
<g transform="translate(315.6 193.0) scale(0.85 1)"><text x="-1.5 14.8 37.6 54.1 70.6 87.3 103.9 120.8" y="0" font-size="23.3" fill="#fff" stroke="#fff" stroke-width="0.45">N<tspan textLength="22.5" lengthAdjust="spacingAndGlyphs">-</tspan>000003</text></g>
<g transform="translate(315.6 213.9) scale(0.85 1)"><text x="-1.5 14.8 37.6 54.1 70.6 87.3 103.9 120.8" y="0" font-size="23.3" fill="#fff" stroke="#fff" stroke-width="0.45">N<tspan textLength="22.5" lengthAdjust="spacingAndGlyphs">-</tspan>000001</text></g>
<text x="226.0" y="168.0" font-size="7.7" fill="#fff" text-anchor="middle" textLength="16.0" lengthAdjust="spacingAndGlyphs" stroke="#fff" stroke-width="0.3">GND</text>
<text x="226.0" y="175.0" font-size="7.9" fill="#fff" text-anchor="middle" textLength="4.6" lengthAdjust="spacingAndGlyphs" stroke="#fff" stroke-width="0.3">3</text>
<text x="226.5" y="195.0" font-size="12.0" fill="#fff" text-anchor="middle" textLength="6.2" lengthAdjust="spacingAndGlyphs" stroke="#fff" stroke-width="0.3">2</text>
<text x="226.0" y="203.0" font-size="7.7" fill="#fff" text-anchor="middle" textLength="16.0" lengthAdjust="spacingAndGlyphs" stroke="#fff" stroke-width="0.3">GND</text>
<text x="226.0" y="210.0" font-size="7.9" fill="#fff" text-anchor="middle" textLength="4.0" lengthAdjust="spacingAndGlyphs" stroke="#fff" stroke-width="0.3">1</text>
<text x="519.5" y="168.0" font-size="7.9" fill="#fff" text-anchor="middle" textLength="4.0" lengthAdjust="spacingAndGlyphs" stroke="#fff" stroke-width="0.3">1</text>
<text x="519.5" y="175.0" font-size="7.7" fill="#fff" text-anchor="middle" textLength="16.0" lengthAdjust="spacingAndGlyphs" stroke="#fff" stroke-width="0.3">GND</text>
<text x="519.7" y="184.5" font-size="9.6" fill="#fff" text-anchor="middle" textLength="5.4" lengthAdjust="spacingAndGlyphs" stroke="#fff" stroke-width="0.3">2</text>
<text x="519.5" y="203.0" font-size="7.9" fill="#fff" text-anchor="middle" textLength="4.6" lengthAdjust="spacingAndGlyphs" stroke="#fff" stroke-width="0.3">3</text>
<text x="519.5" y="210.0" font-size="7.7" fill="#fff" text-anchor="middle" textLength="16.0" lengthAdjust="spacingAndGlyphs" stroke="#fff" stroke-width="0.3">GND</text>
<text transform="translate(247.5 284.0) rotate(-90)" font-size="7.7" fill="#fff" text-anchor="middle" textLength="16.0" lengthAdjust="spacingAndGlyphs" stroke="#fff" stroke-width="0.3">GND</text>
<text transform="translate(254.0 284.3) rotate(-90)" font-size="7.9" fill="#fff" text-anchor="middle" textLength="4.6" lengthAdjust="spacingAndGlyphs" stroke="#fff" stroke-width="0.3">3</text>
<text transform="translate(272.5 284.3) rotate(-90)" font-size="9.6" fill="#fff" text-anchor="middle" textLength="4.6" lengthAdjust="spacingAndGlyphs" stroke="#fff" stroke-width="0.3">2</text>
<text transform="translate(282.0 284.0) rotate(-90)" font-size="7.7" fill="#fff" text-anchor="middle" textLength="16.0" lengthAdjust="spacingAndGlyphs" stroke="#fff" stroke-width="0.3">GND</text>
<text transform="translate(288.0 284.5) rotate(-90)" font-size="7.9" fill="#fff" text-anchor="middle" textLength="4.6" lengthAdjust="spacingAndGlyphs" stroke="#fff" stroke-width="0.3">1</text>
<text transform="translate(464.5 284.0) rotate(-90)" font-size="7.7" fill="#fff" text-anchor="middle" textLength="16.0" lengthAdjust="spacingAndGlyphs" stroke="#fff" stroke-width="0.3">GND</text>
<text transform="translate(471.0 284.3) rotate(-90)" font-size="7.9" fill="#fff" text-anchor="middle" textLength="4.6" lengthAdjust="spacingAndGlyphs" stroke="#fff" stroke-width="0.3">3</text>
<text transform="translate(489.5 284.3) rotate(-90)" font-size="9.6" fill="#fff" text-anchor="middle" textLength="4.6" lengthAdjust="spacingAndGlyphs" stroke="#fff" stroke-width="0.3">2</text>
<text transform="translate(499.0 284.0) rotate(-90)" font-size="7.7" fill="#fff" text-anchor="middle" textLength="16.0" lengthAdjust="spacingAndGlyphs" stroke="#fff" stroke-width="0.3">GND</text>
<text transform="translate(505.0 284.5) rotate(-90)" font-size="7.9" fill="#fff" text-anchor="middle" textLength="4.6" lengthAdjust="spacingAndGlyphs" stroke="#fff" stroke-width="0.3">1</text>
<text x="163.7" y="142.0" font-size="11.6" fill="#c2c2c2" text-anchor="middle" textLength="12.5" lengthAdjust="spacingAndGlyphs" stroke="#c2c2c2" stroke-width="0.15">K1</text>
<text x="164.3" y="156.0" font-size="11.6" fill="#c2c2c2" text-anchor="middle" textLength="29.3" lengthAdjust="spacingAndGlyphs" stroke="#c2c2c2" stroke-width="0.15">INPUT</text>
<text x="564.7" y="139.0" font-size="11.6" fill="#c2c2c2" text-anchor="middle" textLength="12.5" lengthAdjust="spacingAndGlyphs" stroke="#c2c2c2" stroke-width="0.15">K4</text>
<text x="568.4" y="153.0" font-size="11.6" fill="#c2c2c2" text-anchor="middle" textLength="39.3" lengthAdjust="spacingAndGlyphs" stroke="#c2c2c2" stroke-width="0.15">OUTPUT</text>
<text transform="translate(216.3 343.2) rotate(-90)" font-size="11.6" fill="#c2c2c2" text-anchor="middle" textLength="11.3" lengthAdjust="spacingAndGlyphs" stroke="#c2c2c2" stroke-width="0.15">K2</text>
<text transform="translate(230.5 343.1) rotate(-90)" font-size="11.6" fill="#c2c2c2" text-anchor="middle" textLength="46.0" lengthAdjust="spacingAndGlyphs" stroke="#c2c2c2" stroke-width="0.15">COUPLED</text>
<text transform="translate(432.3 347.2) rotate(-90)" font-size="11.6" fill="#c2c2c2" text-anchor="middle" textLength="11.3" lengthAdjust="spacingAndGlyphs" stroke="#c2c2c2" stroke-width="0.15">K3</text>
<text transform="translate(446.5 347.0) rotate(-90)" font-size="11.6" fill="#c2c2c2" text-anchor="middle" textLength="46.4" lengthAdjust="spacingAndGlyphs" stroke="#c2c2c2" stroke-width="0.15">ISOLATED</text>
<g shape-rendering="crispEdges" stroke-width="1" fill="none" style="mix-blend-mode:lighten">
<path d="M161.0 137.5h5M163.5 135.0v5" stroke="#0000c8"/>
<path d="M162.0 151.5h5M164.5 149.0v5" stroke="#0000c8"/>
<path d="M562.0 134.5h5M564.5 132.0v5" stroke="#0000c8"/>
<path d="M566.0 148.5h5M568.5 146.0v5" stroke="#0000c8"/>
<path d="M210.0 343.5h5M212.5 341.0v5" stroke="#0000c8"/>
<path d="M224.0 343.5h5M226.5 341.0v5" stroke="#0000c8"/>
<path d="M426.0 347.5h5M428.5 345.0v5" stroke="#0000c8"/>
<path d="M440.0 347.5h5M442.5 345.0v5" stroke="#0000c8"/>
<path d="M294.0 169.5h5M296.5 167.0v5" stroke="#0000c8"/>
<path d="M245.0 214.5h5M247.5 212.0v5" stroke="#0000c8"/>
<path d="M447.0 204.5h5M449.5 202.0v5" stroke="#0000c8"/>
<path d="M461.0 214.5h5M463.5 212.0v5" stroke="#0000c8"/>
</g>
</g>
<g transform="translate(335,0)">
<g transform="translate(315.6 193.0) scale(0.85 1)"><text x="-1.5 14.8 37.6 54.1 70.6 87.3 103.9 120.8" y="0" font-size="23.3" fill="#fff" stroke="#fff" stroke-width="0.45">N<tspan textLength="22.5" lengthAdjust="spacingAndGlyphs">-</tspan>000003</text></g>
<g transform="translate(315.6 215.7) scale(0.85 1)"><text x="-1.5 14.8 37.6 54.1 70.6 87.3 103.9 120.8" y="0" font-size="23.3" fill="#fff" stroke="#fff" stroke-width="0.45">N<tspan textLength="22.5" lengthAdjust="spacingAndGlyphs">-</tspan>000001</text></g>
<text x="226.0" y="168.0" font-size="7.7" fill="#fff" text-anchor="middle" textLength="16.0" lengthAdjust="spacingAndGlyphs" stroke="#fff" stroke-width="0.3">GND</text>
<text x="226.0" y="175.0" font-size="7.9" fill="#fff" text-anchor="middle" textLength="4.6" lengthAdjust="spacingAndGlyphs" stroke="#fff" stroke-width="0.3">3</text>
<text x="226.5" y="195.0" font-size="12.0" fill="#fff" text-anchor="middle" textLength="6.2" lengthAdjust="spacingAndGlyphs" stroke="#fff" stroke-width="0.3">2</text>
<text x="226.0" y="203.0" font-size="7.7" fill="#fff" text-anchor="middle" textLength="16.0" lengthAdjust="spacingAndGlyphs" stroke="#fff" stroke-width="0.3">GND</text>
<text x="226.0" y="210.0" font-size="7.9" fill="#fff" text-anchor="middle" textLength="4.0" lengthAdjust="spacingAndGlyphs" stroke="#fff" stroke-width="0.3">1</text>
<text x="519.5" y="168.0" font-size="7.9" fill="#fff" text-anchor="middle" textLength="4.0" lengthAdjust="spacingAndGlyphs" stroke="#fff" stroke-width="0.3">1</text>
<text x="519.5" y="175.0" font-size="7.7" fill="#fff" text-anchor="middle" textLength="16.0" lengthAdjust="spacingAndGlyphs" stroke="#fff" stroke-width="0.3">GND</text>
<text x="519.7" y="184.5" font-size="9.6" fill="#fff" text-anchor="middle" textLength="5.4" lengthAdjust="spacingAndGlyphs" stroke="#fff" stroke-width="0.3">2</text>
<text x="519.5" y="203.0" font-size="7.9" fill="#fff" text-anchor="middle" textLength="4.6" lengthAdjust="spacingAndGlyphs" stroke="#fff" stroke-width="0.3">3</text>
<text x="519.5" y="210.0" font-size="7.7" fill="#fff" text-anchor="middle" textLength="16.0" lengthAdjust="spacingAndGlyphs" stroke="#fff" stroke-width="0.3">GND</text>
<text transform="translate(247.5 284.0) rotate(-90)" font-size="7.7" fill="#fff" text-anchor="middle" textLength="16.0" lengthAdjust="spacingAndGlyphs" stroke="#fff" stroke-width="0.3">GND</text>
<text transform="translate(254.0 284.3) rotate(-90)" font-size="7.9" fill="#fff" text-anchor="middle" textLength="4.6" lengthAdjust="spacingAndGlyphs" stroke="#fff" stroke-width="0.3">3</text>
<text transform="translate(272.5 284.3) rotate(-90)" font-size="9.6" fill="#fff" text-anchor="middle" textLength="4.6" lengthAdjust="spacingAndGlyphs" stroke="#fff" stroke-width="0.3">2</text>
<text transform="translate(282.0 284.0) rotate(-90)" font-size="7.7" fill="#fff" text-anchor="middle" textLength="16.0" lengthAdjust="spacingAndGlyphs" stroke="#fff" stroke-width="0.3">GND</text>
<text transform="translate(288.0 284.5) rotate(-90)" font-size="7.9" fill="#fff" text-anchor="middle" textLength="4.6" lengthAdjust="spacingAndGlyphs" stroke="#fff" stroke-width="0.3">1</text>
<text transform="translate(464.5 284.0) rotate(-90)" font-size="7.7" fill="#fff" text-anchor="middle" textLength="16.0" lengthAdjust="spacingAndGlyphs" stroke="#fff" stroke-width="0.3">GND</text>
<text transform="translate(471.0 284.3) rotate(-90)" font-size="7.9" fill="#fff" text-anchor="middle" textLength="4.6" lengthAdjust="spacingAndGlyphs" stroke="#fff" stroke-width="0.3">3</text>
<text transform="translate(489.5 284.3) rotate(-90)" font-size="9.6" fill="#fff" text-anchor="middle" textLength="4.6" lengthAdjust="spacingAndGlyphs" stroke="#fff" stroke-width="0.3">2</text>
<text transform="translate(499.0 284.0) rotate(-90)" font-size="7.7" fill="#fff" text-anchor="middle" textLength="16.0" lengthAdjust="spacingAndGlyphs" stroke="#fff" stroke-width="0.3">GND</text>
<text transform="translate(505.0 284.5) rotate(-90)" font-size="7.9" fill="#fff" text-anchor="middle" textLength="4.6" lengthAdjust="spacingAndGlyphs" stroke="#fff" stroke-width="0.3">1</text>
<text x="163.7" y="142.0" font-size="11.6" fill="#c2c2c2" text-anchor="middle" textLength="12.5" lengthAdjust="spacingAndGlyphs" stroke="#c2c2c2" stroke-width="0.15">K1</text>
<text x="164.3" y="156.0" font-size="11.6" fill="#c2c2c2" text-anchor="middle" textLength="29.3" lengthAdjust="spacingAndGlyphs" stroke="#c2c2c2" stroke-width="0.15">INPUT</text>
<text x="564.7" y="139.0" font-size="11.6" fill="#c2c2c2" text-anchor="middle" textLength="12.5" lengthAdjust="spacingAndGlyphs" stroke="#c2c2c2" stroke-width="0.15">K4</text>
<text x="568.4" y="153.0" font-size="11.6" fill="#c2c2c2" text-anchor="middle" textLength="39.3" lengthAdjust="spacingAndGlyphs" stroke="#c2c2c2" stroke-width="0.15">OUTPUT</text>
<text transform="translate(216.3 343.2) rotate(-90)" font-size="11.6" fill="#c2c2c2" text-anchor="middle" textLength="11.3" lengthAdjust="spacingAndGlyphs" stroke="#c2c2c2" stroke-width="0.15">K2</text>
<text transform="translate(230.5 343.1) rotate(-90)" font-size="11.6" fill="#c2c2c2" text-anchor="middle" textLength="46.0" lengthAdjust="spacingAndGlyphs" stroke="#c2c2c2" stroke-width="0.15">COUPLED</text>
<text transform="translate(432.3 347.2) rotate(-90)" font-size="11.6" fill="#c2c2c2" text-anchor="middle" textLength="11.3" lengthAdjust="spacingAndGlyphs" stroke="#c2c2c2" stroke-width="0.15">K3</text>
<text transform="translate(446.5 347.0) rotate(-90)" font-size="11.6" fill="#c2c2c2" text-anchor="middle" textLength="46.4" lengthAdjust="spacingAndGlyphs" stroke="#c2c2c2" stroke-width="0.15">ISOLATED</text>
<g shape-rendering="crispEdges" stroke-width="1" fill="none" style="mix-blend-mode:lighten">
<path d="M161.0 137.5h5M163.5 135.0v5" stroke="#0000c8"/>
<path d="M162.0 151.5h5M164.5 149.0v5" stroke="#0000c8"/>
<path d="M562.0 134.5h5M564.5 132.0v5" stroke="#0000c8"/>
<path d="M566.0 148.5h5M568.5 146.0v5" stroke="#0000c8"/>
<path d="M210.0 343.5h5M212.5 341.0v5" stroke="#0000c8"/>
<path d="M224.0 343.5h5M226.5 341.0v5" stroke="#0000c8"/>
<path d="M426.0 347.5h5M428.5 345.0v5" stroke="#0000c8"/>
<path d="M440.0 347.5h5M442.5 345.0v5" stroke="#0000c8"/>
<path d="M294.0 169.5h5M296.5 167.0v5" stroke="#0000c8"/>
<path d="M245.0 214.5h5M247.5 212.0v5" stroke="#0000c8"/>
<path d="M447.0 204.5h5M449.5 202.0v5" stroke="#0000c8"/>
<path d="M461.0 214.5h5M463.5 212.0v5" stroke="#0000c8"/>
</g>
</g>
<g transform="translate(0,185)">
<g transform="translate(315.6 193.0) scale(0.85 1)"><text x="-1.5 14.8 37.6 54.1 70.6 87.3 103.9 120.8" y="0" font-size="23.3" fill="#fff" stroke="#fff" stroke-width="0.45">N<tspan textLength="22.5" lengthAdjust="spacingAndGlyphs">-</tspan>000003</text></g>
<g transform="translate(315.6 217.9) scale(0.85 1)"><text x="-1.5 14.8 37.6 54.1 70.6 87.3 103.9 120.8" y="0" font-size="23.3" fill="#fff" stroke="#fff" stroke-width="0.45">N<tspan textLength="22.5" lengthAdjust="spacingAndGlyphs">-</tspan>000001</text></g>
<text x="226.0" y="168.0" font-size="7.7" fill="#fff" text-anchor="middle" textLength="16.0" lengthAdjust="spacingAndGlyphs" stroke="#fff" stroke-width="0.3">GND</text>
<text x="226.0" y="175.0" font-size="7.9" fill="#fff" text-anchor="middle" textLength="4.6" lengthAdjust="spacingAndGlyphs" stroke="#fff" stroke-width="0.3">3</text>
<text x="226.5" y="195.0" font-size="12.0" fill="#fff" text-anchor="middle" textLength="6.2" lengthAdjust="spacingAndGlyphs" stroke="#fff" stroke-width="0.3">2</text>
<text x="226.0" y="203.0" font-size="7.7" fill="#fff" text-anchor="middle" textLength="16.0" lengthAdjust="spacingAndGlyphs" stroke="#fff" stroke-width="0.3">GND</text>
<text x="226.0" y="210.0" font-size="7.9" fill="#fff" text-anchor="middle" textLength="4.0" lengthAdjust="spacingAndGlyphs" stroke="#fff" stroke-width="0.3">1</text>
<text x="519.5" y="168.0" font-size="7.9" fill="#fff" text-anchor="middle" textLength="4.0" lengthAdjust="spacingAndGlyphs" stroke="#fff" stroke-width="0.3">1</text>
<text x="519.5" y="175.0" font-size="7.7" fill="#fff" text-anchor="middle" textLength="16.0" lengthAdjust="spacingAndGlyphs" stroke="#fff" stroke-width="0.3">GND</text>
<text x="519.7" y="184.5" font-size="9.6" fill="#fff" text-anchor="middle" textLength="5.4" lengthAdjust="spacingAndGlyphs" stroke="#fff" stroke-width="0.3">2</text>
<text x="519.5" y="203.0" font-size="7.9" fill="#fff" text-anchor="middle" textLength="4.6" lengthAdjust="spacingAndGlyphs" stroke="#fff" stroke-width="0.3">3</text>
<text x="519.5" y="210.0" font-size="7.7" fill="#fff" text-anchor="middle" textLength="16.0" lengthAdjust="spacingAndGlyphs" stroke="#fff" stroke-width="0.3">GND</text>
<text transform="translate(247.5 284.0) rotate(-90)" font-size="7.7" fill="#fff" text-anchor="middle" textLength="16.0" lengthAdjust="spacingAndGlyphs" stroke="#fff" stroke-width="0.3">GND</text>
<text transform="translate(254.0 284.3) rotate(-90)" font-size="7.9" fill="#fff" text-anchor="middle" textLength="4.6" lengthAdjust="spacingAndGlyphs" stroke="#fff" stroke-width="0.3">3</text>
<text transform="translate(272.5 284.3) rotate(-90)" font-size="9.6" fill="#fff" text-anchor="middle" textLength="4.6" lengthAdjust="spacingAndGlyphs" stroke="#fff" stroke-width="0.3">2</text>
<text transform="translate(282.0 284.0) rotate(-90)" font-size="7.7" fill="#fff" text-anchor="middle" textLength="16.0" lengthAdjust="spacingAndGlyphs" stroke="#fff" stroke-width="0.3">GND</text>
<text transform="translate(288.0 284.5) rotate(-90)" font-size="7.9" fill="#fff" text-anchor="middle" textLength="4.6" lengthAdjust="spacingAndGlyphs" stroke="#fff" stroke-width="0.3">1</text>
<text transform="translate(464.5 284.0) rotate(-90)" font-size="7.7" fill="#fff" text-anchor="middle" textLength="16.0" lengthAdjust="spacingAndGlyphs" stroke="#fff" stroke-width="0.3">GND</text>
<text transform="translate(471.0 284.3) rotate(-90)" font-size="7.9" fill="#fff" text-anchor="middle" textLength="4.6" lengthAdjust="spacingAndGlyphs" stroke="#fff" stroke-width="0.3">3</text>
<text transform="translate(489.5 284.3) rotate(-90)" font-size="9.6" fill="#fff" text-anchor="middle" textLength="4.6" lengthAdjust="spacingAndGlyphs" stroke="#fff" stroke-width="0.3">2</text>
<text transform="translate(499.0 284.0) rotate(-90)" font-size="7.7" fill="#fff" text-anchor="middle" textLength="16.0" lengthAdjust="spacingAndGlyphs" stroke="#fff" stroke-width="0.3">GND</text>
<text transform="translate(505.0 284.5) rotate(-90)" font-size="7.9" fill="#fff" text-anchor="middle" textLength="4.6" lengthAdjust="spacingAndGlyphs" stroke="#fff" stroke-width="0.3">1</text>
<text x="163.7" y="142.0" font-size="11.6" fill="#c2c2c2" text-anchor="middle" textLength="12.5" lengthAdjust="spacingAndGlyphs" stroke="#c2c2c2" stroke-width="0.15">K1</text>
<text x="164.3" y="156.0" font-size="11.6" fill="#c2c2c2" text-anchor="middle" textLength="29.3" lengthAdjust="spacingAndGlyphs" stroke="#c2c2c2" stroke-width="0.15">INPUT</text>
<text x="564.7" y="139.0" font-size="11.6" fill="#c2c2c2" text-anchor="middle" textLength="12.5" lengthAdjust="spacingAndGlyphs" stroke="#c2c2c2" stroke-width="0.15">K4</text>
<text x="568.4" y="153.0" font-size="11.6" fill="#c2c2c2" text-anchor="middle" textLength="39.3" lengthAdjust="spacingAndGlyphs" stroke="#c2c2c2" stroke-width="0.15">OUTPUT</text>
<text transform="translate(216.3 343.2) rotate(-90)" font-size="11.6" fill="#c2c2c2" text-anchor="middle" textLength="11.3" lengthAdjust="spacingAndGlyphs" stroke="#c2c2c2" stroke-width="0.15">K2</text>
<text transform="translate(230.5 343.1) rotate(-90)" font-size="11.6" fill="#c2c2c2" text-anchor="middle" textLength="46.0" lengthAdjust="spacingAndGlyphs" stroke="#c2c2c2" stroke-width="0.15">COUPLED</text>
<text transform="translate(432.3 347.2) rotate(-90)" font-size="11.6" fill="#c2c2c2" text-anchor="middle" textLength="11.3" lengthAdjust="spacingAndGlyphs" stroke="#c2c2c2" stroke-width="0.15">K3</text>
<text transform="translate(446.5 347.0) rotate(-90)" font-size="11.6" fill="#c2c2c2" text-anchor="middle" textLength="46.4" lengthAdjust="spacingAndGlyphs" stroke="#c2c2c2" stroke-width="0.15">ISOLATED</text>
<g shape-rendering="crispEdges" stroke-width="1" fill="none" style="mix-blend-mode:lighten">
<path d="M161.0 137.5h5M163.5 135.0v5" stroke="#0000c8"/>
<path d="M162.0 151.5h5M164.5 149.0v5" stroke="#0000c8"/>
<path d="M562.0 134.5h5M564.5 132.0v5" stroke="#0000c8"/>
<path d="M566.0 148.5h5M568.5 146.0v5" stroke="#0000c8"/>
<path d="M210.0 343.5h5M212.5 341.0v5" stroke="#0000c8"/>
<path d="M224.0 343.5h5M226.5 341.0v5" stroke="#0000c8"/>
<path d="M426.0 347.5h5M428.5 345.0v5" stroke="#0000c8"/>
<path d="M440.0 347.5h5M442.5 345.0v5" stroke="#0000c8"/>
<path d="M294.0 169.5h5M296.5 167.0v5" stroke="#0000c8"/>
<path d="M245.0 214.5h5M247.5 212.0v5" stroke="#0000c8"/>
<path d="M447.0 204.5h5M449.5 202.0v5" stroke="#0000c8"/>
<path d="M461.0 214.5h5M463.5 212.0v5" stroke="#0000c8"/>
</g>
</g>
<g transform="translate(335,185)">
<g transform="translate(315.6 193.0) scale(0.85 1)"><text x="-1.5 14.8 37.6 54.1 70.6 87.3 103.9 120.8" y="0" font-size="23.3" fill="#fff" stroke="#fff" stroke-width="0.45">N<tspan textLength="22.5" lengthAdjust="spacingAndGlyphs">-</tspan>000003</text></g>
<g transform="translate(315.6 219.7) scale(0.85 1)"><text x="-1.5 14.8 37.6 54.1 70.6 87.3 103.9 120.8" y="0" font-size="23.3" fill="#fff" stroke="#fff" stroke-width="0.45">N<tspan textLength="22.5" lengthAdjust="spacingAndGlyphs">-</tspan>000001</text></g>
<text x="226.0" y="168.0" font-size="7.7" fill="#fff" text-anchor="middle" textLength="16.0" lengthAdjust="spacingAndGlyphs" stroke="#fff" stroke-width="0.3">GND</text>
<text x="226.0" y="175.0" font-size="7.9" fill="#fff" text-anchor="middle" textLength="4.6" lengthAdjust="spacingAndGlyphs" stroke="#fff" stroke-width="0.3">3</text>
<text x="226.5" y="195.0" font-size="12.0" fill="#fff" text-anchor="middle" textLength="6.2" lengthAdjust="spacingAndGlyphs" stroke="#fff" stroke-width="0.3">2</text>
<text x="226.0" y="203.0" font-size="7.7" fill="#fff" text-anchor="middle" textLength="16.0" lengthAdjust="spacingAndGlyphs" stroke="#fff" stroke-width="0.3">GND</text>
<text x="226.0" y="210.0" font-size="7.9" fill="#fff" text-anchor="middle" textLength="4.0" lengthAdjust="spacingAndGlyphs" stroke="#fff" stroke-width="0.3">1</text>
<text x="519.5" y="168.0" font-size="7.9" fill="#fff" text-anchor="middle" textLength="4.0" lengthAdjust="spacingAndGlyphs" stroke="#fff" stroke-width="0.3">1</text>
<text x="519.5" y="175.0" font-size="7.7" fill="#fff" text-anchor="middle" textLength="16.0" lengthAdjust="spacingAndGlyphs" stroke="#fff" stroke-width="0.3">GND</text>
<text x="519.7" y="184.5" font-size="9.6" fill="#fff" text-anchor="middle" textLength="5.4" lengthAdjust="spacingAndGlyphs" stroke="#fff" stroke-width="0.3">2</text>
<text x="519.5" y="203.0" font-size="7.9" fill="#fff" text-anchor="middle" textLength="4.6" lengthAdjust="spacingAndGlyphs" stroke="#fff" stroke-width="0.3">3</text>
<text x="519.5" y="210.0" font-size="7.7" fill="#fff" text-anchor="middle" textLength="16.0" lengthAdjust="spacingAndGlyphs" stroke="#fff" stroke-width="0.3">GND</text>
<text transform="translate(247.5 284.0) rotate(-90)" font-size="7.7" fill="#fff" text-anchor="middle" textLength="16.0" lengthAdjust="spacingAndGlyphs" stroke="#fff" stroke-width="0.3">GND</text>
<text transform="translate(254.0 284.3) rotate(-90)" font-size="7.9" fill="#fff" text-anchor="middle" textLength="4.6" lengthAdjust="spacingAndGlyphs" stroke="#fff" stroke-width="0.3">3</text>
<text transform="translate(272.5 284.3) rotate(-90)" font-size="9.6" fill="#fff" text-anchor="middle" textLength="4.6" lengthAdjust="spacingAndGlyphs" stroke="#fff" stroke-width="0.3">2</text>
<text transform="translate(282.0 284.0) rotate(-90)" font-size="7.7" fill="#fff" text-anchor="middle" textLength="16.0" lengthAdjust="spacingAndGlyphs" stroke="#fff" stroke-width="0.3">GND</text>
<text transform="translate(288.0 284.5) rotate(-90)" font-size="7.9" fill="#fff" text-anchor="middle" textLength="4.6" lengthAdjust="spacingAndGlyphs" stroke="#fff" stroke-width="0.3">1</text>
<text transform="translate(464.5 284.0) rotate(-90)" font-size="7.7" fill="#fff" text-anchor="middle" textLength="16.0" lengthAdjust="spacingAndGlyphs" stroke="#fff" stroke-width="0.3">GND</text>
<text transform="translate(471.0 284.3) rotate(-90)" font-size="7.9" fill="#fff" text-anchor="middle" textLength="4.6" lengthAdjust="spacingAndGlyphs" stroke="#fff" stroke-width="0.3">3</text>
<text transform="translate(489.5 284.3) rotate(-90)" font-size="9.6" fill="#fff" text-anchor="middle" textLength="4.6" lengthAdjust="spacingAndGlyphs" stroke="#fff" stroke-width="0.3">2</text>
<text transform="translate(499.0 284.0) rotate(-90)" font-size="7.7" fill="#fff" text-anchor="middle" textLength="16.0" lengthAdjust="spacingAndGlyphs" stroke="#fff" stroke-width="0.3">GND</text>
<text transform="translate(505.0 284.5) rotate(-90)" font-size="7.9" fill="#fff" text-anchor="middle" textLength="4.6" lengthAdjust="spacingAndGlyphs" stroke="#fff" stroke-width="0.3">1</text>
<text x="163.7" y="142.0" font-size="11.6" fill="#c2c2c2" text-anchor="middle" textLength="12.5" lengthAdjust="spacingAndGlyphs" stroke="#c2c2c2" stroke-width="0.15">K1</text>
<text x="164.3" y="156.0" font-size="11.6" fill="#c2c2c2" text-anchor="middle" textLength="29.3" lengthAdjust="spacingAndGlyphs" stroke="#c2c2c2" stroke-width="0.15">INPUT</text>
<text x="564.7" y="139.0" font-size="11.6" fill="#c2c2c2" text-anchor="middle" textLength="12.5" lengthAdjust="spacingAndGlyphs" stroke="#c2c2c2" stroke-width="0.15">K4</text>
<text x="568.4" y="153.0" font-size="11.6" fill="#c2c2c2" text-anchor="middle" textLength="39.3" lengthAdjust="spacingAndGlyphs" stroke="#c2c2c2" stroke-width="0.15">OUTPUT</text>
<text transform="translate(216.3 343.2) rotate(-90)" font-size="11.6" fill="#c2c2c2" text-anchor="middle" textLength="11.3" lengthAdjust="spacingAndGlyphs" stroke="#c2c2c2" stroke-width="0.15">K2</text>
<text transform="translate(230.5 343.1) rotate(-90)" font-size="11.6" fill="#c2c2c2" text-anchor="middle" textLength="46.0" lengthAdjust="spacingAndGlyphs" stroke="#c2c2c2" stroke-width="0.15">COUPLED</text>
<text transform="translate(432.3 347.2) rotate(-90)" font-size="11.6" fill="#c2c2c2" text-anchor="middle" textLength="11.3" lengthAdjust="spacingAndGlyphs" stroke="#c2c2c2" stroke-width="0.15">K3</text>
<text transform="translate(446.5 347.0) rotate(-90)" font-size="11.6" fill="#c2c2c2" text-anchor="middle" textLength="46.4" lengthAdjust="spacingAndGlyphs" stroke="#c2c2c2" stroke-width="0.15">ISOLATED</text>
<g shape-rendering="crispEdges" stroke-width="1" fill="none" style="mix-blend-mode:lighten">
<path d="M161.0 137.5h5M163.5 135.0v5" stroke="#0000c8"/>
<path d="M162.0 151.5h5M164.5 149.0v5" stroke="#0000c8"/>
<path d="M562.0 134.5h5M564.5 132.0v5" stroke="#0000c8"/>
<path d="M566.0 148.5h5M568.5 146.0v5" stroke="#0000c8"/>
<path d="M210.0 343.5h5M212.5 341.0v5" stroke="#0000c8"/>
<path d="M224.0 343.5h5M226.5 341.0v5" stroke="#0000c8"/>
<path d="M426.0 347.5h5M428.5 345.0v5" stroke="#0000c8"/>
<path d="M440.0 347.5h5M442.5 345.0v5" stroke="#0000c8"/>
<path d="M294.0 169.5h5M296.5 167.0v5" stroke="#0000c8"/>
<path d="M245.0 214.5h5M247.5 212.0v5" stroke="#0000c8"/>
<path d="M447.0 204.5h5M449.5 202.0v5" stroke="#0000c8"/>
<path d="M461.0 214.5h5M463.5 212.0v5" stroke="#0000c8"/>
</g>
</g>
<g transform="translate(0,370)">
<g transform="translate(315.6 193.0) scale(0.85 1)"><text x="-1.5 14.8 37.6 54.1 70.6 87.3 103.9 120.8" y="0" font-size="23.3" fill="#fff" stroke="#fff" stroke-width="0.45">N<tspan textLength="22.5" lengthAdjust="spacingAndGlyphs">-</tspan>000003</text></g>
<g transform="translate(315.6 221.0) scale(0.85 1)"><text x="-1.5 14.8 37.6 54.1 70.6 87.3 103.9 120.8" y="0" font-size="23.3" fill="#fff" stroke="#fff" stroke-width="0.45">N<tspan textLength="22.5" lengthAdjust="spacingAndGlyphs">-</tspan>000001</text></g>
<text x="226.0" y="168.0" font-size="7.7" fill="#fff" text-anchor="middle" textLength="16.0" lengthAdjust="spacingAndGlyphs" stroke="#fff" stroke-width="0.3">GND</text>
<text x="226.0" y="175.0" font-size="7.9" fill="#fff" text-anchor="middle" textLength="4.6" lengthAdjust="spacingAndGlyphs" stroke="#fff" stroke-width="0.3">3</text>
<text x="226.5" y="195.0" font-size="12.0" fill="#fff" text-anchor="middle" textLength="6.2" lengthAdjust="spacingAndGlyphs" stroke="#fff" stroke-width="0.3">2</text>
<text x="226.0" y="203.0" font-size="7.7" fill="#fff" text-anchor="middle" textLength="16.0" lengthAdjust="spacingAndGlyphs" stroke="#fff" stroke-width="0.3">GND</text>
<text x="226.0" y="210.0" font-size="7.9" fill="#fff" text-anchor="middle" textLength="4.0" lengthAdjust="spacingAndGlyphs" stroke="#fff" stroke-width="0.3">1</text>
<text x="519.5" y="168.0" font-size="7.9" fill="#fff" text-anchor="middle" textLength="4.0" lengthAdjust="spacingAndGlyphs" stroke="#fff" stroke-width="0.3">1</text>
<text x="519.5" y="175.0" font-size="7.7" fill="#fff" text-anchor="middle" textLength="16.0" lengthAdjust="spacingAndGlyphs" stroke="#fff" stroke-width="0.3">GND</text>
<text x="519.7" y="184.5" font-size="9.6" fill="#fff" text-anchor="middle" textLength="5.4" lengthAdjust="spacingAndGlyphs" stroke="#fff" stroke-width="0.3">2</text>
<text x="519.5" y="203.0" font-size="7.9" fill="#fff" text-anchor="middle" textLength="4.6" lengthAdjust="spacingAndGlyphs" stroke="#fff" stroke-width="0.3">3</text>
<text x="519.5" y="210.0" font-size="7.7" fill="#fff" text-anchor="middle" textLength="16.0" lengthAdjust="spacingAndGlyphs" stroke="#fff" stroke-width="0.3">GND</text>
<text transform="translate(247.5 284.0) rotate(-90)" font-size="7.7" fill="#fff" text-anchor="middle" textLength="16.0" lengthAdjust="spacingAndGlyphs" stroke="#fff" stroke-width="0.3">GND</text>
<text transform="translate(254.0 284.3) rotate(-90)" font-size="7.9" fill="#fff" text-anchor="middle" textLength="4.6" lengthAdjust="spacingAndGlyphs" stroke="#fff" stroke-width="0.3">3</text>
<text transform="translate(272.5 284.3) rotate(-90)" font-size="9.6" fill="#fff" text-anchor="middle" textLength="4.6" lengthAdjust="spacingAndGlyphs" stroke="#fff" stroke-width="0.3">2</text>
<text transform="translate(282.0 284.0) rotate(-90)" font-size="7.7" fill="#fff" text-anchor="middle" textLength="16.0" lengthAdjust="spacingAndGlyphs" stroke="#fff" stroke-width="0.3">GND</text>
<text transform="translate(288.0 284.5) rotate(-90)" font-size="7.9" fill="#fff" text-anchor="middle" textLength="4.6" lengthAdjust="spacingAndGlyphs" stroke="#fff" stroke-width="0.3">1</text>
<text transform="translate(464.5 284.0) rotate(-90)" font-size="7.7" fill="#fff" text-anchor="middle" textLength="16.0" lengthAdjust="spacingAndGlyphs" stroke="#fff" stroke-width="0.3">GND</text>
<text transform="translate(471.0 284.3) rotate(-90)" font-size="7.9" fill="#fff" text-anchor="middle" textLength="4.6" lengthAdjust="spacingAndGlyphs" stroke="#fff" stroke-width="0.3">3</text>
<text transform="translate(489.5 284.3) rotate(-90)" font-size="9.6" fill="#fff" text-anchor="middle" textLength="4.6" lengthAdjust="spacingAndGlyphs" stroke="#fff" stroke-width="0.3">2</text>
<text transform="translate(499.0 284.0) rotate(-90)" font-size="7.7" fill="#fff" text-anchor="middle" textLength="16.0" lengthAdjust="spacingAndGlyphs" stroke="#fff" stroke-width="0.3">GND</text>
<text transform="translate(505.0 284.5) rotate(-90)" font-size="7.9" fill="#fff" text-anchor="middle" textLength="4.6" lengthAdjust="spacingAndGlyphs" stroke="#fff" stroke-width="0.3">1</text>
<text x="163.7" y="142.0" font-size="11.6" fill="#c2c2c2" text-anchor="middle" textLength="12.5" lengthAdjust="spacingAndGlyphs" stroke="#c2c2c2" stroke-width="0.15">K1</text>
<text x="164.3" y="156.0" font-size="11.6" fill="#c2c2c2" text-anchor="middle" textLength="29.3" lengthAdjust="spacingAndGlyphs" stroke="#c2c2c2" stroke-width="0.15">INPUT</text>
<text x="564.7" y="139.0" font-size="11.6" fill="#c2c2c2" text-anchor="middle" textLength="12.5" lengthAdjust="spacingAndGlyphs" stroke="#c2c2c2" stroke-width="0.15">K4</text>
<text x="568.4" y="153.0" font-size="11.6" fill="#c2c2c2" text-anchor="middle" textLength="39.3" lengthAdjust="spacingAndGlyphs" stroke="#c2c2c2" stroke-width="0.15">OUTPUT</text>
<text transform="translate(216.3 343.2) rotate(-90)" font-size="11.6" fill="#c2c2c2" text-anchor="middle" textLength="11.3" lengthAdjust="spacingAndGlyphs" stroke="#c2c2c2" stroke-width="0.15">K2</text>
<text transform="translate(230.5 343.1) rotate(-90)" font-size="11.6" fill="#c2c2c2" text-anchor="middle" textLength="46.0" lengthAdjust="spacingAndGlyphs" stroke="#c2c2c2" stroke-width="0.15">COUPLED</text>
<text transform="translate(432.3 347.2) rotate(-90)" font-size="11.6" fill="#c2c2c2" text-anchor="middle" textLength="11.3" lengthAdjust="spacingAndGlyphs" stroke="#c2c2c2" stroke-width="0.15">K3</text>
<text transform="translate(446.5 347.0) rotate(-90)" font-size="11.6" fill="#c2c2c2" text-anchor="middle" textLength="46.4" lengthAdjust="spacingAndGlyphs" stroke="#c2c2c2" stroke-width="0.15">ISOLATED</text>
<g shape-rendering="crispEdges" stroke-width="1" fill="none" style="mix-blend-mode:lighten">
<path d="M161.0 137.5h5M163.5 135.0v5" stroke="#0000c8"/>
<path d="M162.0 151.5h5M164.5 149.0v5" stroke="#0000c8"/>
<path d="M562.0 134.5h5M564.5 132.0v5" stroke="#0000c8"/>
<path d="M566.0 148.5h5M568.5 146.0v5" stroke="#0000c8"/>
<path d="M210.0 343.5h5M212.5 341.0v5" stroke="#0000c8"/>
<path d="M224.0 343.5h5M226.5 341.0v5" stroke="#0000c8"/>
<path d="M426.0 347.5h5M428.5 345.0v5" stroke="#0000c8"/>
<path d="M440.0 347.5h5M442.5 345.0v5" stroke="#0000c8"/>
<path d="M294.0 169.5h5M296.5 167.0v5" stroke="#0000c8"/>
<path d="M245.0 214.5h5M247.5 212.0v5" stroke="#0000c8"/>
<path d="M447.0 204.5h5M449.5 202.0v5" stroke="#0000c8"/>
<path d="M461.0 214.5h5M463.5 212.0v5" stroke="#0000c8"/>
</g>
</g>
<g transform="translate(335,370)">
<g transform="translate(315.6 193.0) scale(0.85 1)"><text x="-1.5 14.8 37.6 54.1 70.6 87.3 103.9 120.8" y="0" font-size="23.3" fill="#fff" stroke="#fff" stroke-width="0.45">N<tspan textLength="22.5" lengthAdjust="spacingAndGlyphs">-</tspan>000003</text></g>
<g transform="translate(315.6 222.8) scale(0.85 1)"><text x="-1.5 14.8 37.6 54.1 70.6 87.3 103.9 120.8" y="0" font-size="23.3" fill="#fff" stroke="#fff" stroke-width="0.45">N<tspan textLength="22.5" lengthAdjust="spacingAndGlyphs">-</tspan>000001</text></g>
<text x="226.0" y="168.0" font-size="7.7" fill="#fff" text-anchor="middle" textLength="16.0" lengthAdjust="spacingAndGlyphs" stroke="#fff" stroke-width="0.3">GND</text>
<text x="226.0" y="175.0" font-size="7.9" fill="#fff" text-anchor="middle" textLength="4.6" lengthAdjust="spacingAndGlyphs" stroke="#fff" stroke-width="0.3">3</text>
<text x="226.5" y="195.0" font-size="12.0" fill="#fff" text-anchor="middle" textLength="6.2" lengthAdjust="spacingAndGlyphs" stroke="#fff" stroke-width="0.3">2</text>
<text x="226.0" y="203.0" font-size="7.7" fill="#fff" text-anchor="middle" textLength="16.0" lengthAdjust="spacingAndGlyphs" stroke="#fff" stroke-width="0.3">GND</text>
<text x="226.0" y="210.0" font-size="7.9" fill="#fff" text-anchor="middle" textLength="4.0" lengthAdjust="spacingAndGlyphs" stroke="#fff" stroke-width="0.3">1</text>
<text x="519.5" y="168.0" font-size="7.9" fill="#fff" text-anchor="middle" textLength="4.0" lengthAdjust="spacingAndGlyphs" stroke="#fff" stroke-width="0.3">1</text>
<text x="519.5" y="175.0" font-size="7.7" fill="#fff" text-anchor="middle" textLength="16.0" lengthAdjust="spacingAndGlyphs" stroke="#fff" stroke-width="0.3">GND</text>
<text x="519.7" y="184.5" font-size="9.6" fill="#fff" text-anchor="middle" textLength="5.4" lengthAdjust="spacingAndGlyphs" stroke="#fff" stroke-width="0.3">2</text>
<text x="519.5" y="203.0" font-size="7.9" fill="#fff" text-anchor="middle" textLength="4.6" lengthAdjust="spacingAndGlyphs" stroke="#fff" stroke-width="0.3">3</text>
<text x="519.5" y="210.0" font-size="7.7" fill="#fff" text-anchor="middle" textLength="16.0" lengthAdjust="spacingAndGlyphs" stroke="#fff" stroke-width="0.3">GND</text>
<text transform="translate(247.5 284.0) rotate(-90)" font-size="7.7" fill="#fff" text-anchor="middle" textLength="16.0" lengthAdjust="spacingAndGlyphs" stroke="#fff" stroke-width="0.3">GND</text>
<text transform="translate(254.0 284.3) rotate(-90)" font-size="7.9" fill="#fff" text-anchor="middle" textLength="4.6" lengthAdjust="spacingAndGlyphs" stroke="#fff" stroke-width="0.3">3</text>
<text transform="translate(272.5 284.3) rotate(-90)" font-size="9.6" fill="#fff" text-anchor="middle" textLength="4.6" lengthAdjust="spacingAndGlyphs" stroke="#fff" stroke-width="0.3">2</text>
<text transform="translate(282.0 284.0) rotate(-90)" font-size="7.7" fill="#fff" text-anchor="middle" textLength="16.0" lengthAdjust="spacingAndGlyphs" stroke="#fff" stroke-width="0.3">GND</text>
<text transform="translate(288.0 284.5) rotate(-90)" font-size="7.9" fill="#fff" text-anchor="middle" textLength="4.6" lengthAdjust="spacingAndGlyphs" stroke="#fff" stroke-width="0.3">1</text>
<text transform="translate(464.5 284.0) rotate(-90)" font-size="7.7" fill="#fff" text-anchor="middle" textLength="16.0" lengthAdjust="spacingAndGlyphs" stroke="#fff" stroke-width="0.3">GND</text>
<text transform="translate(471.0 284.3) rotate(-90)" font-size="7.9" fill="#fff" text-anchor="middle" textLength="4.6" lengthAdjust="spacingAndGlyphs" stroke="#fff" stroke-width="0.3">3</text>
<text transform="translate(489.5 284.3) rotate(-90)" font-size="9.6" fill="#fff" text-anchor="middle" textLength="4.6" lengthAdjust="spacingAndGlyphs" stroke="#fff" stroke-width="0.3">2</text>
<text transform="translate(499.0 284.0) rotate(-90)" font-size="7.7" fill="#fff" text-anchor="middle" textLength="16.0" lengthAdjust="spacingAndGlyphs" stroke="#fff" stroke-width="0.3">GND</text>
<text transform="translate(505.0 284.5) rotate(-90)" font-size="7.9" fill="#fff" text-anchor="middle" textLength="4.6" lengthAdjust="spacingAndGlyphs" stroke="#fff" stroke-width="0.3">1</text>
<text x="163.7" y="142.0" font-size="11.6" fill="#c2c2c2" text-anchor="middle" textLength="12.5" lengthAdjust="spacingAndGlyphs" stroke="#c2c2c2" stroke-width="0.15">K1</text>
<text x="164.3" y="156.0" font-size="11.6" fill="#c2c2c2" text-anchor="middle" textLength="29.3" lengthAdjust="spacingAndGlyphs" stroke="#c2c2c2" stroke-width="0.15">INPUT</text>
<text x="564.7" y="139.0" font-size="11.6" fill="#c2c2c2" text-anchor="middle" textLength="12.5" lengthAdjust="spacingAndGlyphs" stroke="#c2c2c2" stroke-width="0.15">K4</text>
<text x="568.4" y="153.0" font-size="11.6" fill="#c2c2c2" text-anchor="middle" textLength="39.3" lengthAdjust="spacingAndGlyphs" stroke="#c2c2c2" stroke-width="0.15">OUTPUT</text>
<text transform="translate(216.3 343.2) rotate(-90)" font-size="11.6" fill="#c2c2c2" text-anchor="middle" textLength="11.3" lengthAdjust="spacingAndGlyphs" stroke="#c2c2c2" stroke-width="0.15">K2</text>
<text transform="translate(230.5 343.1) rotate(-90)" font-size="11.6" fill="#c2c2c2" text-anchor="middle" textLength="46.0" lengthAdjust="spacingAndGlyphs" stroke="#c2c2c2" stroke-width="0.15">COUPLED</text>
<text transform="translate(432.3 347.2) rotate(-90)" font-size="11.6" fill="#c2c2c2" text-anchor="middle" textLength="11.3" lengthAdjust="spacingAndGlyphs" stroke="#c2c2c2" stroke-width="0.15">K3</text>
<text transform="translate(446.5 347.0) rotate(-90)" font-size="11.6" fill="#c2c2c2" text-anchor="middle" textLength="46.4" lengthAdjust="spacingAndGlyphs" stroke="#c2c2c2" stroke-width="0.15">ISOLATED</text>
<g shape-rendering="crispEdges" stroke-width="1" fill="none" style="mix-blend-mode:lighten">
<path d="M161.0 137.5h5M163.5 135.0v5" stroke="#0000c8"/>
<path d="M162.0 151.5h5M164.5 149.0v5" stroke="#0000c8"/>
<path d="M562.0 134.5h5M564.5 132.0v5" stroke="#0000c8"/>
<path d="M566.0 148.5h5M568.5 146.0v5" stroke="#0000c8"/>
<path d="M210.0 343.5h5M212.5 341.0v5" stroke="#0000c8"/>
<path d="M224.0 343.5h5M226.5 341.0v5" stroke="#0000c8"/>
<path d="M426.0 347.5h5M428.5 345.0v5" stroke="#0000c8"/>
<path d="M440.0 347.5h5M442.5 345.0v5" stroke="#0000c8"/>
<path d="M294.0 169.5h5M296.5 167.0v5" stroke="#0000c8"/>
<path d="M245.0 214.5h5M247.5 212.0v5" stroke="#0000c8"/>
<path d="M447.0 204.5h5M449.5 202.0v5" stroke="#0000c8"/>
<path d="M461.0 214.5h5M463.5 212.0v5" stroke="#0000c8"/>
</g>
</g>
<g stroke="#ffff00" stroke-width="1" fill="none" shape-rendering="crispEdges">
<rect x="208.5" y="123.5" width="329" height="178"/>
<rect x="543.5" y="123.5" width="329" height="178"/>
<rect x="208.5" y="308.5" width="329" height="178"/>
<rect x="543.5" y="308.5" width="329" height="178"/>
<rect x="208.5" y="493.5" width="329" height="178"/>
<rect x="543.5" y="493.5" width="329" height="178"/>
</g>
<g style="mix-blend-mode:difference">
<g stroke="#fff" stroke-width="1" fill="none" shape-rendering="crispEdges">
<path d="M519.5 187.500H560M519.500 187.500V371.500H561.500V556.500H519.500"/>
<path d="M264.500 284V469.500M481 284.500H599M481.500 469.500H599M481.500 469.500V654.500H599"/>
</g>
<g stroke="#fff" stroke-width="1" fill="none" shape-rendering="crispEdges">
<path d="M526 204.500H560M526 389.500H561M526 574.500H560"/>
</g>
<g stroke="#fff" stroke-width="1" fill="none">
<path d="M833.700 285.500L854.700 354.500M833.700 470.500L854.700 539.500"/>
</g>
<g stroke="#fff" stroke-width="1" fill="none" shape-rendering="crispEdges"><path d="M784.500 303V327M772 315.500H797"/></g>
</g>
<path d="M784.500 312.800V330.600L788.300 327L790.800 332.200L793.400 331L790.900 325.900L796 324.600z" fill="#2a2a2a" stroke="#fff" stroke-width="1"/>
</svg>
<div style="left:1043px;top:122px;width:16px;height:610px;background:linear-gradient(90deg,#cfcfcb,#f4f4f2 60%,#fbfbfa);border-right:1px solid #a6a6a2"><i style="left:1px;top:0;width:14px;height:15px;background:linear-gradient(90deg,#f4f4f3,#dcdcd9);border:1px solid #b8b8b2;border-radius:2px"></i><i style="left:4px;top:5px;border:3.500px solid transparent;border-bottom:4.500px solid #8c8c8a;border-top:none"></i><i style="left:1px;top:15px;width:14px;height:240px;background:linear-gradient(90deg,#f2f1f0,#d3d0cf);border:1px solid #9a9896;border-left-color:#fff;border-top-color:#fff;border-radius:2px"></i><i style="left:4px;top:131px;width:8px;height:9px;background:repeating-linear-gradient(#8a8a88 0 1px,#f4f4f2 1px 2px)"></i><i style="left:1px;top:595px;width:14px;height:15px;background:linear-gradient(90deg,#f4f4f3,#dcdcd9);border:1px solid #b8b8b2;border-radius:2px"></i><i style="left:3.500px;top:600px;border:4.500px solid transparent;border-top:6px solid #222;border-bottom:none"></i></div>
<div style="left:39px;top:732px;width:1004px;height:15px;background:linear-gradient(#cfcfcb,#f4f4f2 60%,#fbfbfa);border-bottom:1px solid #a6a6a2"><i style="left:0;top:1px;width:15px;height:14px;background:linear-gradient(#f4f4f3,#dcdcd9);border:1px solid #b8b8b2;border-radius:2px"></i><i style="left:5px;top:4px;border:3.500px solid transparent;border-right:4.500px solid #8c8c8a;border-left:none"></i><i style="left:15px;top:1px;width:470px;height:14px;background:linear-gradient(#f2f1f0,#d3d0cf);border:1px solid #9a9896;border-left-color:#fff;border-top-color:#fff;border-radius:2px"></i><i style="left:245px;top:4px;width:9px;height:8px;background:repeating-linear-gradient(90deg,#8a8a88 0 1px,#f4f4f2 1px 2px)"></i><i style="left:989px;top:1px;width:15px;height:14px;background:linear-gradient(#f4f4f3,#dcdcd9);border:1px solid #b8b8b2;border-radius:2px"></i><i style="left:995px;top:3.500px;border:4.500px solid transparent;border-left:6px solid #222;border-right:none"></i></div>
<i style="left:1043px;top:732px;width:16px;height:15px;background:#ededeb"></i>
<div class="vtb" style="left:1059px;top:121px;width:38px;height:626px">
<div class="ic" style="left:5.5px;top:11px"><svg width="26" height="26" viewBox="0 0 26 26"><path d="M0.500 8h1.500a1.300 1.300 0 0 0 1.300-1.300V3.300a1.300 1.300 0 0 1 2.600 0V12.700a1.300 1.300 0 0 0 2.600 0V3.300a1.300 1.300 0 0 1 2.600 0V12.700a1.300 1.300 0 0 0 2.600 0V3.300a1.300 1.300 0 0 1 2.600 0V12.700a1.300 1.300 0 0 0 2.600 0V3.300a1.300 1.300 0 0 1 2.600 0V6.700a1.300 1.300 0 0 0 1.300 1.300h1.200" fill="none" stroke="#d82828" stroke-width="1.200"/><path d="M1.500 20.500H22.500" stroke="#111" stroke-width="1.500"/><path d="M1.500 20.500m4-3.200l-4.500 3.200 4.500 3.200M22.500 20.500m-4-3.200l4.500 3.200-4.500 3.200" fill="none" stroke="#111" stroke-width="1.500"/></svg></div>
<div class="ic" style="left:6px;top:42px"><svg width="26" height="26" viewBox="0 0 26 26"><rect x="0.500" y="5.200" width="6" height="6.600" fill="#d83030"/><rect x="16.300" y="5.200" width="6" height="6.600" fill="#d83030"/><path d="M9.300 8.500h4.400M11.500 6.300v4.400" stroke="#2838ff" stroke-width="1.500"/><path d="M4.500 20.200H19.500" stroke="#111" stroke-width="1.500"/><path d="M4.500 20.200m4-3.200l-4.500 3.200 4.500 3.200M19.500 20.200m-4-3.200l4.500 3.200-4.500 3.200" fill="none" stroke="#111" stroke-width="1.500"/></svg></div>
<div class="ic" style="left:6px;top:88px"><svg width="26" height="26" viewBox="0 0 26 26"><rect x="2.200" y="3" width="6" height="17.600" fill="#d83030"/><path d="M17.200 3.200V20.500" stroke="#111" stroke-width="1.500"/><path d="M17.200 3.200m-3.200 4l3.200-4.500 3.200 4.500M17.200 20.500m-3.200-4l3.200 4.500 3.200-4.500" fill="none" stroke="#111" stroke-width="1.500"/></svg></div>
<div class="ic" style="left:6px;top:123px"><svg width="26" height="26" viewBox="0 0 26 26"><path d="M2.400 7.400q5.800-3 11.600 0L8.200 18z" fill="#d83030"/><rect x="5.500" y="18" width="5.500" height="4" fill="#d83030"/><path d="M2 3.500q6.200-3.500 12.500 0" fill="none" stroke="#111" stroke-width="1.100"/><path d="M1.500 1.500v3h3M15 1.500v3h-3" fill="none" stroke="#111" stroke-width="1.100"/><path d="M19.600 6V19" stroke="#111" stroke-width="1.500"/><path d="M19.600 6m-3.200 4l3.200-4.500 3.200 4.500M19.600 19m-3.200-4l3.200 4.500 3.200-4.500" fill="none" stroke="#111" stroke-width="1.500"/></svg></div>
<div class="ic" style="left:6px;top:154px"><svg width="26" height="26" viewBox="0 0 26 26"><path d="M1.500 13l5-8 2 3.500 3-6 3 5 3.500-5.500 2.500 3V19l-3 4-3-4.500-3 5-3-5-2.500 3z" fill="#d83030"/></svg></div>
<i class="hsep" style="left:6px;top:78px;width:24px"></i>
<i style="left:-1px;top:190px;width:1px;height:10px"></i></div>
<div class="vtb" style="left:1097px;top:121px;width:38px;height:626px">
<i class="sel" style="left:2px;top:6px;width:32px;height:32px"></i>
<div class="ic" style="left:2.5px;top:9px"><svg width="28" height="28" viewBox="0 0 28 28"><ellipse cx="16.500" cy="23.800" rx="7.500" ry="1.800" fill="#8f9a48" opacity=".75"/><path d="M9.500 4.500v18l5.500-4.500 2 4c.8 1.500 3.600.4 3-1.300l-1.600-4.200 6.300-1z" fill="#bcc48e" stroke="#555" stroke-width="1.200" stroke-linejoin="round"/></svg></div>
<div class="ic" style="left:7px;top:53px"><svg width="26" height="26" viewBox="0 0 26 26"><path d="M2 17.300h23M17 2v22" stroke="#808080" stroke-width="2"/><path d="M0 7h24" stroke="#f01010" stroke-width="2.200"/><path d="M5.500 2v22" stroke="#10e010" stroke-width="2.600"/><circle cx="5.500" cy="7" r="1.900" fill="#e89040" stroke="#222" stroke-width=".8"/><path d="M7.500 8.500v12l2.900-2.700 2.200 4.700 2.300-1.100-2.200-4.600h4z" fill="#c6c8f8" stroke="#111" stroke-width="1"/></svg></div>
<div class="ic" style="left:5px;top:86px"><svg width="26" height="26" viewBox="0 0 26 26"><rect x="0" y="0" width="26" height="26" rx="5" fill="#d9d9d9"/><path d="M9 9L1 0M9 9l17-7M9 9l17 4M9 9L0 13M9 9l-5 17M9 9l2 17" stroke="#fff" stroke-width="1.400"/><circle cx="9" cy="9" r="2.500" fill="#fff" stroke="#f01010" stroke-width="1.300"/><path d="M10.500 10.500v12l2.900-2.700 2.200 4.700 2.300-1.100-2.200-4.600h4z" fill="#c6c8f8" stroke="#111" stroke-width="1"/></svg></div>
<div class="ic" style="left:6px;top:129px"><svg width="26" height="26" viewBox="0 0 26 26"><rect x="0.500" y="4.500" width="24" height="16" rx="1" fill="#cfcfcf" stroke="#222" stroke-width="1.200"/><path d="M0.500 10a2.400 2.400 0 0 1 0 5" fill="#eee" stroke="#222" stroke-width=".9"/><rect x="3.5" y="0.5" width="3.600" height="7.400" fill="#ff8200" stroke="#d86400" stroke-width=".8"/><rect x="4.7" y="3.3" width="1.200" height="2" fill="#ffe8c8"/><rect x="3.5" y="17.5" width="3.600" height="7.400" fill="#ff8200" stroke="#d86400" stroke-width=".8"/><rect x="4.7" y="20.3" width="1.200" height="2" fill="#ffe8c8"/><rect x="10.5" y="0.5" width="3.600" height="7.400" fill="#ff8200" stroke="#d86400" stroke-width=".8"/><rect x="11.7" y="3.3" width="1.200" height="2" fill="#ffe8c8"/><rect x="10.5" y="17.5" width="3.600" height="7.400" fill="#ff8200" stroke="#d86400" stroke-width=".8"/><rect x="11.7" y="20.3" width="1.200" height="2" fill="#ffe8c8"/><rect x="17.5" y="0.5" width="3.600" height="7.400" fill="#ff8200" stroke="#d86400" stroke-width=".8"/><rect x="18.7" y="3.3" width="1.200" height="2" fill="#ffe8c8"/><rect x="17.5" y="17.5" width="3.600" height="7.400" fill="#ff8200" stroke="#d86400" stroke-width=".8"/><rect x="18.7" y="20.3" width="1.200" height="2" fill="#ffe8c8"/></svg></div>
<div class="ic" style="left:6px;top:165px"><svg width="26" height="26" viewBox="0 0 26 26"><path d="M1 3.500h10.500l3.500 13.500h8" fill="none" stroke="#008000" stroke-width="3" stroke-linejoin="miter"/></svg></div>
<div class="ic" style="left:6px;top:198.2px"><svg width="26" height="26" viewBox="0 0 26 26"><rect x="0.500" y="0.500" width="23.500" height="23" fill="#008000" stroke="#0a5a0a" stroke-width="1"/><path d="M9 7l3.500-1.500 11.500 12v5.500h-3z" fill="#f0f0f0"/><circle cx="7.800" cy="8" r="5" fill="#f0f0f0"/><path d="M9.500 7.500l2.500-.5 12 13v2h-2z" fill="#008000"/><circle cx="7.800" cy="8" r="3.200" fill="#008000"/><circle cx="7.800" cy="8" r="1.400" fill="#f0f0f0"/></svg></div>
<div class="ic" style="left:6px;top:232.5px"><svg width="26" height="26" viewBox="0 0 26 26"><rect x="0.500" y="0.500" width="23.500" height="23" fill="#a9d2c8" stroke="#333" stroke-width="1"/><path d="M10 8.500l3.500-1L24 17" fill="none" stroke="#108020" stroke-width="2"/><circle cx="6" cy="5" r="3.600" fill="none" stroke="#8c8c1c" stroke-width="2"/><path d="M2 23c2-7 8-12 14-15M1.500 10c6 2 11 7 15 13.500" fill="none" stroke="#e02030" stroke-width="2.200"/></svg></div>
<div class="ic" style="left:3.5px;top:274.7px"><svg width="26" height="26" viewBox="0 0 26 26"><path d="M4 23L25 3" stroke="#1818ff" stroke-width="3.200" stroke-dasharray="4.600 2.600"/></svg></div>
<div class="ic" style="left:6.3px;top:307px"><svg width="27" height="27" viewBox="0 0 27 27"><circle cx="11.700" cy="14.200" r="10.800" fill="none" stroke="#2020ff" stroke-width="1.700"/><rect x="9.4" y="11.9" width="4.600" height="4.600" fill="#3cb44c" stroke="#1a5a22" stroke-width=".8"/><rect x="17.8" y="4.2" width="4.600" height="4.600" fill="#3cb44c" stroke="#1a5a22" stroke-width=".8"/></svg></div>
<div class="ic" style="left:6.3px;top:342px"><svg width="26" height="26" viewBox="0 0 26 26"><path d="M4 4.500c9-1 17 5 16 16.500" fill="none" stroke="#2020ff" stroke-width="2.600"/><rect x="1.7" y="2.2" width="4.600" height="4.600" fill="#3cb44c" stroke="#1a5a22" stroke-width=".8"/><rect x="1.7" y="19.2" width="4.600" height="4.600" fill="#3cb44c" stroke="#1a5a22" stroke-width=".8"/><rect x="17.7" y="19.2" width="4.600" height="4.600" fill="#3cb44c" stroke="#1a5a22" stroke-width=".8"/></svg></div>
<div class="ic" style="left:6px;top:376px"><svg width="26" height="26" viewBox="0 0 26 26"><text x="12.700" y="21.300" font-size="23" font-weight="bold" fill="#111" text-anchor="middle" style="font-family:DejaVu Serif,Liberation Serif,serif" textLength="16" lengthAdjust="spacingAndGlyphs">T</text></svg></div>
<div class="ic" style="left:6px;top:420px"><svg width="26" height="26" viewBox="0 0 26 26"><text x="13" y="10" font-size="12.500" font-weight="bold" fill="#111" text-anchor="middle" style="font-family:DejaVu Sans,Liberation Sans,sans-serif">N</text><path d="M1.750 9v13.500M24.250 9v13.500" stroke="#1818ff" stroke-width="2.200"/><path d="M4 14h18" stroke="#111" stroke-width="1.300"/><path d="M3 14l5.500-3v6zM23 14l-5.500-3v6z" fill="#111"/><path d="M10 11.500l6 5" stroke="#111" stroke-width="1"/></svg></div>
<div class="ic" style="left:5px;top:453.5px"><svg width="26" height="26" viewBox="0 0 26 26"><circle cx="13" cy="12.7" r="7" fill="#e6e000"/><path d="M13 12.7V5.699999999999999A7 7 0 0 1 20 12.7z" fill="#111"/><path d="M13 12.7V19.7A7 7 0 0 1 6 12.7z" fill="#111"/><circle cx="13" cy="12.7" r="7" fill="none" stroke="#111" stroke-width="1"/><path d="M2 12.7H24M13 1.6999999999999993V23.7" stroke="#111" stroke-width="1.200"/></svg></div>
<div class="ic" style="left:6px;top:495.5px"><svg width="26" height="26" viewBox="0 0 26 26"><defs><linearGradient id="tr" x1="0" y1="0" x2="1" y2="0"><stop offset="0" stop-color="#a8a8a8"/><stop offset=".35" stop-color="#ececec"/><stop offset="1" stop-color="#8e8e8e"/></linearGradient></defs><path d="M4.800 8h15.400l-1.400 14.500c-2 1.600-10.600 1.600-12.600 0z" fill="url(#tr)" stroke="#8a8a8a" stroke-width=".8"/><path d="M8.300 10.500v11.500M11 11v12M14 11v12M16.700 10.500v11.500" stroke="#9c9c9c" stroke-width="1.100"/><ellipse cx="12.500" cy="7" rx="8.800" ry="3" fill="#e0e0e0" stroke="#8e8e8e" stroke-width=".9"/><ellipse cx="12.500" cy="6.300" rx="6" ry="1.600" fill="#f2f2f2"/><path d="M10.300 4.200q2.200-2 4.400 0" fill="none" stroke="#8e8e8e" stroke-width="1.200"/></svg></div>
<div class="ic" style="left:6px;top:538px"><svg width="26" height="27" viewBox="0 0 26 27"><circle cx="10.5" cy="14.5" r="6" fill="#e6e000"/><path d="M10.5 14.5V8.5A6 6 0 0 1 16.5 14.5z" fill="#111"/><path d="M10.5 14.5V20.5A6 6 0 0 1 4.5 14.5z" fill="#111"/><circle cx="10.5" cy="14.5" r="6" fill="none" stroke="#111" stroke-width="1"/><path d="M2.0 14.5H19.0M10.5 6.0V23.0" stroke="#111" stroke-width="1.200"/><path d="M3 4h21.500M20.500 1v22" stroke="#111" stroke-width="1.400" fill="none"/><path d="M0 4l6-3.500v7zM20.500 25.500l-3.500-6h7z" fill="#111"/></svg></div>
<div class="ic" style="left:6px;top:572px"><svg width="26" height="26" viewBox="0 0 26 26"><circle cx="3.5" cy="3.5" r="1.500" fill="#111"/><circle cx="3.5" cy="9.5" r="1.500" fill="#111"/><circle cx="3.5" cy="15.5" r="1.500" fill="#111"/><circle cx="3.5" cy="21.5" r="1.500" fill="#111"/><circle cx="9.5" cy="3.5" r="1.500" fill="#111"/><circle cx="9.5" cy="9.5" r="1.500" fill="#111"/><circle cx="9.5" cy="15.5" r="1.500" fill="#111"/><circle cx="9.5" cy="21.5" r="1.500" fill="#111"/><circle cx="15.5" cy="3.5" r="1.500" fill="#111"/><circle cx="15.5" cy="9.5" r="1.500" fill="#111"/><circle cx="15.5" cy="15.5" r="1.500" fill="#111"/><circle cx="15.5" cy="21.5" r="1.500" fill="#111"/><circle cx="21.5" cy="3.5" r="1.500" fill="#111"/><circle cx="21.5" cy="9.5" r="1.500" fill="#111"/><circle cx="21.5" cy="15.5" r="1.500" fill="#111"/><circle cx="21.5" cy="21.5" r="1.500" fill="#111"/><path d="M0 9.500h24.500M9.500 1v24" stroke="#e83030" stroke-width="1.100"/></svg></div>
<i class="hsep" style="left:5px;top:42px;width:26px"></i>
<i class="hsep" style="left:5px;top:120px;width:26px"></i>
<i class="hsep" style="left:5px;top:265px;width:26px"></i>
<i class="hsep" style="left:5px;top:410px;width:26px"></i>
<i class="hsep" style="left:5px;top:486px;width:26px"></i>
<i class="hsep" style="left:5px;top:529px;width:26px"></i>
</div>
<i style="left:1135px;top:121px;width:3px;height:626px;background:#dcdcda"></i><i style="left:1135px;top:428px;width:3px;height:12px;background:repeating-linear-gradient(#fff 0 1px,#dcdcda 1px 3px)"></i>
<div style="left:1138px;top:121px;width:142px;height:626px;background:#ededeb;border-left:1px solid #a8a8a4"><div style="left:0;top:0;width:141px;height:17px;background:linear-gradient(#bdbdbd,#e2e2e2);font-size:11.33px;line-height:16px"><span style="left:3px;top:0">Visibles</span></div><i style="left:6px;top:24px;width:130px;height:602px;background:#fff"></i><i style="left:7px;top:51px;width:128px;height:1px;background:#b0b0aa"></i><div style="left:55px;top:29px;width:57px;height:23px;background:#e9e9e7;border:1px solid #b0b0aa;border-bottom:none;border-radius:3px 3px 0 0;font-size:11.33px;line-height:22px"><span style="left:4px;top:0">Render</span></div><div style="left:11px;top:25px;width:45px;height:27px;background:#fff;border:1px solid #b0b0aa;border-bottom:none;border-radius:3px 3px 0 0;font-size:11.33px;line-height:26px"><span style="left:4px;top:0">Capa</span></div><i style="left:12px;top:52px;width:117px;height:574px;background:#eeeeec"></i></div>
<div class="lay" style="top:174px">
<span class="sw"><i style="background:#a00000"></i></span><span class="nm">F.Cu</span><span class="cb">
<svg width="11" height="11" viewBox="0 0 11 11"><path d="M1 4.700l2.300-.6 1 2.600L8 1.700h1.900L5.200 9.700H3.500z" fill="#000"/></svg>
</span></div>
<div class="lay" style="top:192px">
<svg style="left:4px;top:3px" width="9" height="14" viewBox="0 0 9 14"><path d="M0 0L8 7H0z" fill="#8c8cff"/><path d="M0 7H8L0 14z" fill="#0000ff"/></svg>
<span class="sw"><i style="background:#00a000"></i></span><span class="nm">B.Cu</span><span class="cb">
</span></div>
<div class="lay" style="top:210px">
<span class="sw"><i style="background:#a000a0"></i></span><span class="nm">F.Adhes</span><span class="cb">
<svg width="11" height="11" viewBox="0 0 11 11"><path d="M1 4.700l2.300-.6 1 2.600L8 1.700h1.900L5.200 9.700H3.500z" fill="#000"/></svg>
</span></div>
<div class="lay" style="top:228px">
<span class="sw"><i style="background:#0000c2"></i></span><span class="nm">B.Adhes</span><span class="cb">
<svg width="11" height="11" viewBox="0 0 11 11"><path d="M1 4.700l2.300-.6 1 2.600L8 1.700h1.900L5.200 9.700H3.500z" fill="#000"/></svg>
</span></div>
<div class="lay" style="top:246px">
<span class="sw"><i style="background:#a00000"></i></span><span class="nm">F.Paste</span><span class="cb">
<svg width="11" height="11" viewBox="0 0 11 11"><path d="M1 4.700l2.300-.6 1 2.600L8 1.700h1.900L5.200 9.700H3.500z" fill="#000"/></svg>
</span></div>
<div class="lay" style="top:264px">
<span class="sw"><i style="background:#00ffff"></i></span><span class="nm">B.Paste</span><span class="cb">
<svg width="11" height="11" viewBox="0 0 11 11"><path d="M1 4.700l2.300-.6 1 2.600L8 1.700h1.900L5.200 9.700H3.500z" fill="#000"/></svg>
</span></div>
<div class="lay" style="top:282px">
<span class="sw"><i style="background:#00a0a0"></i></span><span class="nm">F.SilkS</span><span class="cb">
</span></div>
<div class="lay" style="top:300px">
<span class="sw"><i style="background:#a000a0"></i></span><span class="nm">B.SilkS</span><span class="cb">
<svg width="11" height="11" viewBox="0 0 11 11"><path d="M1 4.700l2.300-.6 1 2.600L8 1.700h1.900L5.200 9.700H3.500z" fill="#000"/></svg>
</span></div>
<div class="lay" style="top:318px">
<span class="sw"><i style="background:#a000a0"></i></span><span class="nm">F.Mask</span><span class="cb">
<svg width="11" height="11" viewBox="0 0 11 11"><path d="M1 4.700l2.300-.6 1 2.600L8 1.700h1.900L5.200 9.700H3.500z" fill="#000"/></svg>
</span></div>
<div class="lay" style="top:336px">
<span class="sw"><i style="background:#848400"></i></span><span class="nm">B.Mask</span><span class="cb">
<svg width="11" height="11" viewBox="0 0 11 11"><path d="M1 4.700l2.300-.6 1 2.600L8 1.700h1.900L5.200 9.700H3.500z" fill="#000"/></svg>
</span></div>
<div class="lay" style="top:354px">
<span class="sw"><i style="background:#c2c2c2"></i></span><span class="nm">Dwgs.User</span><span class="cb">
<svg width="11" height="11" viewBox="0 0 11 11"><path d="M1 4.700l2.300-.6 1 2.600L8 1.700h1.900L5.200 9.700H3.500z" fill="#000"/></svg>
</span></div>
<div class="lay" style="top:372px">
<span class="sw"><i style="background:#0000c2"></i></span><span class="nm">Cmts.User</span><span class="cb">
<svg width="11" height="11" viewBox="0 0 11 11"><path d="M1 4.700l2.300-.6 1 2.600L8 1.700h1.900L5.200 9.700H3.500z" fill="#000"/></svg>
</span></div>
<div class="lay" style="top:390px">
<span class="sw"><i style="background:#00a000"></i></span><span class="nm">Eco1.User</span><span class="cb">
<svg width="11" height="11" viewBox="0 0 11 11"><path d="M1 4.700l2.300-.6 1 2.600L8 1.700h1.900L5.200 9.700H3.500z" fill="#000"/></svg>
</span></div>
<div class="lay" style="top:408px">
<span class="sw"><i style="background:#ffff00"></i></span><span class="nm">Eco2.User</span><span class="cb">
<svg width="11" height="11" viewBox="0 0 11 11"><path d="M1 4.700l2.300-.6 1 2.600L8 1.700h1.900L5.200 9.700H3.500z" fill="#000"/></svg>
</span></div>
<div class="lay" style="top:426px">
<span class="sw"><i style="background:#ffff00"></i></span><span class="nm">Edge.Cuts</span><span class="cb">
<svg width="11" height="11" viewBox="0 0 11 11"><path d="M1 4.700l2.300-.6 1 2.600L8 1.700h1.900L5.200 9.700H3.500z" fill="#000"/></svg>
</span></div>
<div style="left:0;top:748px;width:1280px;height:31px;background:#eeeeec;border-top:1px solid #9e9e9a;border-bottom:1px solid #9e9e9a"></div>
<span class="msg" style="left:14px;top:749px;color:#1d4f1d">Isletas<br>72</span>
<span class="msg" style="left:94px;top:749px;color:#1d4f1d">Vias<br>0</span>
<span class="msg" style="left:159px;top:749px;color:#1d4f1d">trackSegm<br>36</span>
<span class="msg" style="left:266px;top:749px;color:#0e4a55">Nodos<br>72</span>
<span class="msg" style="left:344px;top:749px;color:#a41a1a">Redes<br>4</span>
<span class="msg" style="left:420px;top:749px;color:#1d4f1d">Enlaces<br>69</span>
<span class="msg" style="left:507px;top:749px;color:#1d4f1d">Conectado<br>54</span>
<span class="msg" style="left:613px;top:749px;color:#1818c0">No Conectado<br>15</span>
<span class="msg" style="left:495px;top:783px;color:#1a1a1a;letter-spacing:-0.35px">Z 143259</span>
<span class="msg" style="left:565px;top:783px;color:#1a1a1a;letter-spacing:-0.35px">X 113,500000</span>
<span class="msg" style="left:662px;top:783px;color:#1a1a1a;letter-spacing:-0.35px">Y 62,500000</span>
<span class="msg" style="left:776px;top:783px;color:#1a1a1a;letter-spacing:-0.35px">dx 113,500000</span>
<span class="msg" style="left:880px;top:783px;color:#1a1a1a;letter-spacing:-0.35px">dy 62,500000</span>
<span class="msg" style="left:977px;top:783px;color:#1a1a1a;letter-spacing:-0.35px">d 129,570444</span>
<span class="msg" style="left:1106px;top:783px;color:#1a1a1a;letter-spacing:-0.35px">mm</span>
</body></html>
